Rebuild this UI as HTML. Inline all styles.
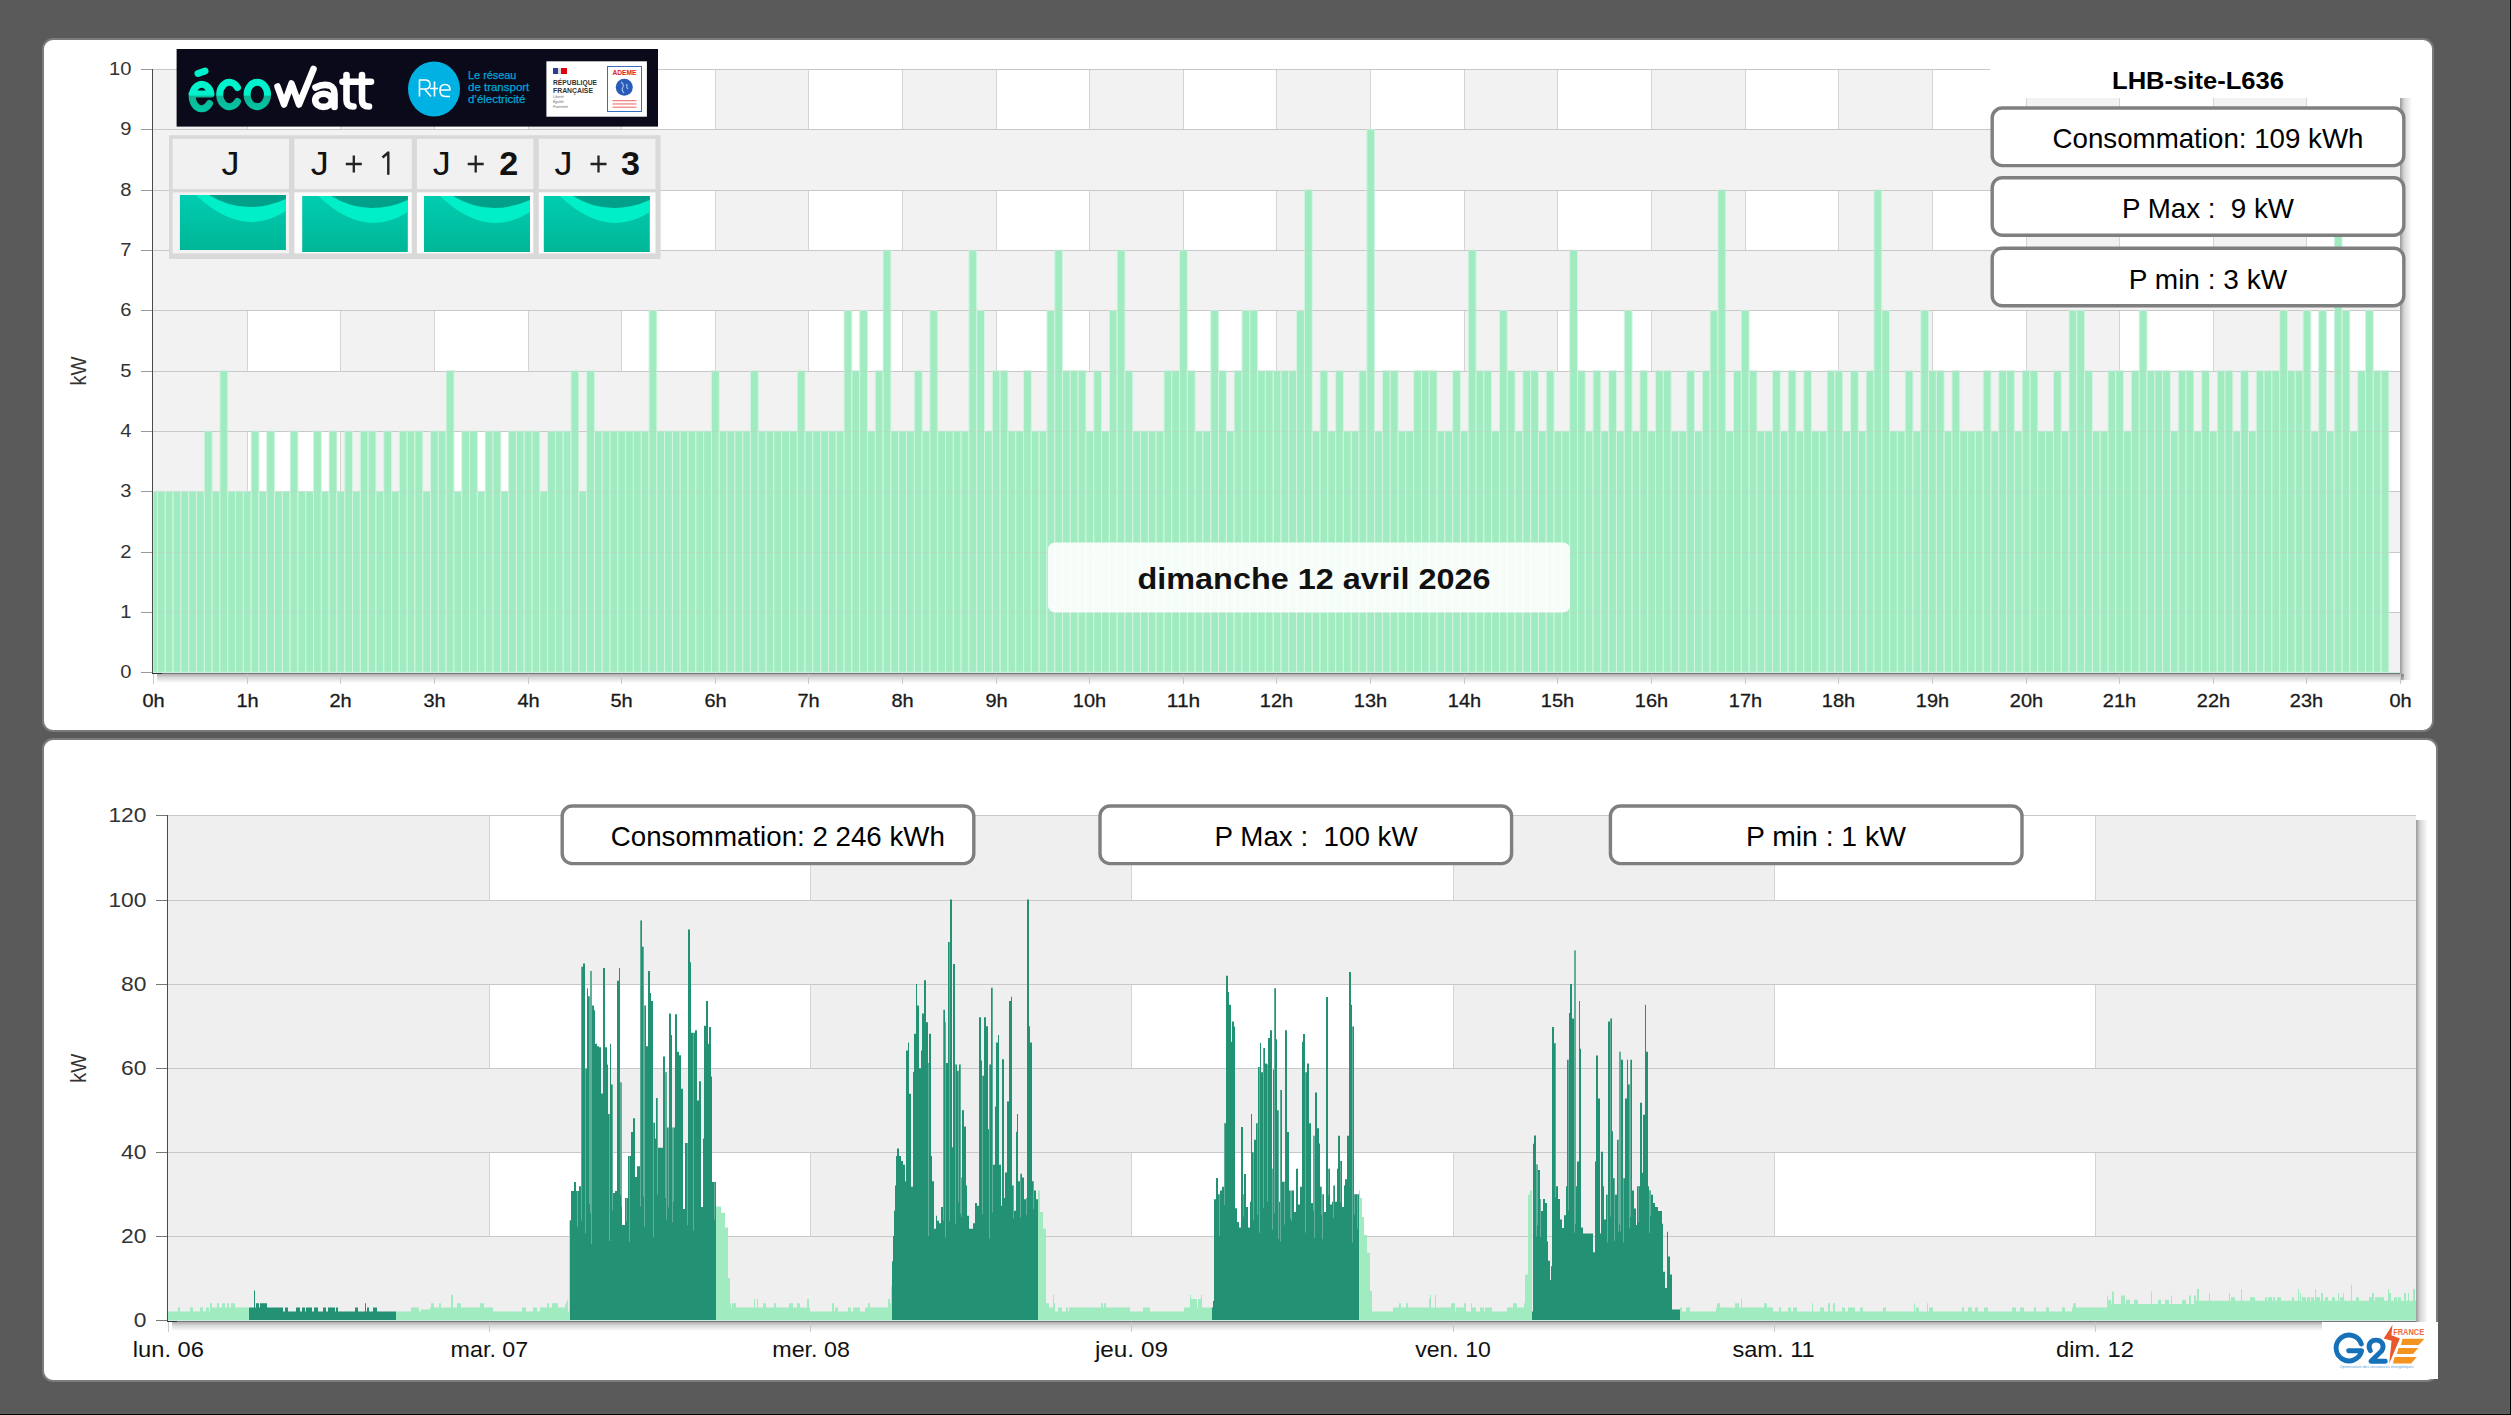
<!DOCTYPE html><html><head><meta charset="utf-8"><title>chart</title><style>
html,body{margin:0;padding:0;width:2511px;height:1415px;overflow:hidden;background:#5a5a5a;}
svg{position:absolute;left:0;top:0;display:block}
</style></head><body>
<svg width="2511" height="1415" viewBox="0 0 2511 1415" font-family="Liberation Sans, sans-serif">
<defs>
<linearGradient id="teal" x1="0" y1="0" x2="0" y2="1"><stop offset="0" stop-color="#00cdb0"/><stop offset="1" stop-color="#00b697"/></linearGradient>
<linearGradient id="eco" gradientUnits="userSpaceOnUse" x1="0" y1="66" x2="0" y2="112"><stop offset="0" stop-color="#00f2cc"/><stop offset="0.63" stop-color="#00f2cc"/><stop offset="0.66" stop-color="#0fb596"/><stop offset="1" stop-color="#00c8a4"/></linearGradient>
<linearGradient id="shR" x1="0" y1="0" x2="1" y2="0"><stop offset="0" stop-color="#000" stop-opacity="0.40"/><stop offset="0.35" stop-color="#000" stop-opacity="0.16"/><stop offset="1" stop-color="#000" stop-opacity="0"/></linearGradient>
<linearGradient id="shB" x1="0" y1="0" x2="0" y2="1"><stop offset="0" stop-color="#000" stop-opacity="0.32"/><stop offset="0.4" stop-color="#000" stop-opacity="0.15"/><stop offset="1" stop-color="#000" stop-opacity="0"/></linearGradient>
</defs>
<rect x="2509" y="0" width="1" height="1414" fill="#606060"/>
<rect x="0" y="1413" width="2510" height="1" fill="#606060"/>
<rect x="2510" y="0" width="1" height="1415" fill="#000"/>
<rect x="0" y="1414" width="2511" height="1" fill="#000"/>
<rect x="43" y="39" width="2390" height="692" rx="10" ry="10" fill="#fff" stroke="#7b7b7b" stroke-width="2"/>
<rect x="43" y="739" width="2394" height="642" rx="10" ry="10" fill="#fff" stroke="#7b7b7b" stroke-width="2"/>
<rect x="153" y="612" width="2247" height="60" fill="#f2f2f2"/>
<rect x="153" y="552" width="94" height="60" fill="#f2f2f2"/>
<rect x="340" y="552" width="94" height="60" fill="#f2f2f2"/>
<rect x="528" y="552" width="93" height="60" fill="#f2f2f2"/>
<rect x="715" y="552" width="93" height="60" fill="#f2f2f2"/>
<rect x="902" y="552" width="94" height="60" fill="#f2f2f2"/>
<rect x="1089" y="552" width="94" height="60" fill="#f2f2f2"/>
<rect x="1276" y="552" width="94" height="60" fill="#f2f2f2"/>
<rect x="1464" y="552" width="93" height="60" fill="#f2f2f2"/>
<rect x="1651" y="552" width="94" height="60" fill="#f2f2f2"/>
<rect x="1838" y="552" width="94" height="60" fill="#f2f2f2"/>
<rect x="2026" y="552" width="93" height="60" fill="#f2f2f2"/>
<rect x="2213" y="552" width="93" height="60" fill="#f2f2f2"/>
<rect x="247" y="552" width="1" height="60" fill="#d4d4d4"/>
<rect x="340" y="552" width="1" height="60" fill="#d4d4d4"/>
<rect x="434" y="552" width="1" height="60" fill="#d4d4d4"/>
<rect x="528" y="552" width="1" height="60" fill="#d4d4d4"/>
<rect x="621" y="552" width="1" height="60" fill="#d4d4d4"/>
<rect x="715" y="552" width="1" height="60" fill="#d4d4d4"/>
<rect x="808" y="552" width="1" height="60" fill="#d4d4d4"/>
<rect x="902" y="552" width="1" height="60" fill="#d4d4d4"/>
<rect x="996" y="552" width="1" height="60" fill="#d4d4d4"/>
<rect x="1089" y="552" width="1" height="60" fill="#d4d4d4"/>
<rect x="1183" y="552" width="1" height="60" fill="#d4d4d4"/>
<rect x="1276" y="552" width="1" height="60" fill="#d4d4d4"/>
<rect x="1370" y="552" width="1" height="60" fill="#d4d4d4"/>
<rect x="1464" y="552" width="1" height="60" fill="#d4d4d4"/>
<rect x="1557" y="552" width="1" height="60" fill="#d4d4d4"/>
<rect x="1651" y="552" width="1" height="60" fill="#d4d4d4"/>
<rect x="1745" y="552" width="1" height="60" fill="#d4d4d4"/>
<rect x="1838" y="552" width="1" height="60" fill="#d4d4d4"/>
<rect x="1932" y="552" width="1" height="60" fill="#d4d4d4"/>
<rect x="2026" y="552" width="1" height="60" fill="#d4d4d4"/>
<rect x="2119" y="552" width="1" height="60" fill="#d4d4d4"/>
<rect x="2213" y="552" width="1" height="60" fill="#d4d4d4"/>
<rect x="2306" y="552" width="1" height="60" fill="#d4d4d4"/>
<rect x="153" y="491" width="2247" height="61" fill="#f2f2f2"/>
<rect x="153" y="431" width="94" height="60" fill="#f2f2f2"/>
<rect x="340" y="431" width="94" height="60" fill="#f2f2f2"/>
<rect x="528" y="431" width="93" height="60" fill="#f2f2f2"/>
<rect x="715" y="431" width="93" height="60" fill="#f2f2f2"/>
<rect x="902" y="431" width="94" height="60" fill="#f2f2f2"/>
<rect x="1089" y="431" width="94" height="60" fill="#f2f2f2"/>
<rect x="1276" y="431" width="94" height="60" fill="#f2f2f2"/>
<rect x="1464" y="431" width="93" height="60" fill="#f2f2f2"/>
<rect x="1651" y="431" width="94" height="60" fill="#f2f2f2"/>
<rect x="1838" y="431" width="94" height="60" fill="#f2f2f2"/>
<rect x="2026" y="431" width="93" height="60" fill="#f2f2f2"/>
<rect x="2213" y="431" width="93" height="60" fill="#f2f2f2"/>
<rect x="247" y="431" width="1" height="60" fill="#d4d4d4"/>
<rect x="340" y="431" width="1" height="60" fill="#d4d4d4"/>
<rect x="434" y="431" width="1" height="60" fill="#d4d4d4"/>
<rect x="528" y="431" width="1" height="60" fill="#d4d4d4"/>
<rect x="621" y="431" width="1" height="60" fill="#d4d4d4"/>
<rect x="715" y="431" width="1" height="60" fill="#d4d4d4"/>
<rect x="808" y="431" width="1" height="60" fill="#d4d4d4"/>
<rect x="902" y="431" width="1" height="60" fill="#d4d4d4"/>
<rect x="996" y="431" width="1" height="60" fill="#d4d4d4"/>
<rect x="1089" y="431" width="1" height="60" fill="#d4d4d4"/>
<rect x="1183" y="431" width="1" height="60" fill="#d4d4d4"/>
<rect x="1276" y="431" width="1" height="60" fill="#d4d4d4"/>
<rect x="1370" y="431" width="1" height="60" fill="#d4d4d4"/>
<rect x="1464" y="431" width="1" height="60" fill="#d4d4d4"/>
<rect x="1557" y="431" width="1" height="60" fill="#d4d4d4"/>
<rect x="1651" y="431" width="1" height="60" fill="#d4d4d4"/>
<rect x="1745" y="431" width="1" height="60" fill="#d4d4d4"/>
<rect x="1838" y="431" width="1" height="60" fill="#d4d4d4"/>
<rect x="1932" y="431" width="1" height="60" fill="#d4d4d4"/>
<rect x="2026" y="431" width="1" height="60" fill="#d4d4d4"/>
<rect x="2119" y="431" width="1" height="60" fill="#d4d4d4"/>
<rect x="2213" y="431" width="1" height="60" fill="#d4d4d4"/>
<rect x="2306" y="431" width="1" height="60" fill="#d4d4d4"/>
<rect x="153" y="371" width="2247" height="60" fill="#f2f2f2"/>
<rect x="153" y="310" width="94" height="61" fill="#f2f2f2"/>
<rect x="340" y="310" width="94" height="61" fill="#f2f2f2"/>
<rect x="528" y="310" width="93" height="61" fill="#f2f2f2"/>
<rect x="715" y="310" width="93" height="61" fill="#f2f2f2"/>
<rect x="902" y="310" width="94" height="61" fill="#f2f2f2"/>
<rect x="1089" y="310" width="94" height="61" fill="#f2f2f2"/>
<rect x="1276" y="310" width="94" height="61" fill="#f2f2f2"/>
<rect x="1464" y="310" width="93" height="61" fill="#f2f2f2"/>
<rect x="1651" y="310" width="94" height="61" fill="#f2f2f2"/>
<rect x="1838" y="310" width="94" height="61" fill="#f2f2f2"/>
<rect x="2026" y="310" width="93" height="61" fill="#f2f2f2"/>
<rect x="2213" y="310" width="93" height="61" fill="#f2f2f2"/>
<rect x="247" y="310" width="1" height="61" fill="#d4d4d4"/>
<rect x="340" y="310" width="1" height="61" fill="#d4d4d4"/>
<rect x="434" y="310" width="1" height="61" fill="#d4d4d4"/>
<rect x="528" y="310" width="1" height="61" fill="#d4d4d4"/>
<rect x="621" y="310" width="1" height="61" fill="#d4d4d4"/>
<rect x="715" y="310" width="1" height="61" fill="#d4d4d4"/>
<rect x="808" y="310" width="1" height="61" fill="#d4d4d4"/>
<rect x="902" y="310" width="1" height="61" fill="#d4d4d4"/>
<rect x="996" y="310" width="1" height="61" fill="#d4d4d4"/>
<rect x="1089" y="310" width="1" height="61" fill="#d4d4d4"/>
<rect x="1183" y="310" width="1" height="61" fill="#d4d4d4"/>
<rect x="1276" y="310" width="1" height="61" fill="#d4d4d4"/>
<rect x="1370" y="310" width="1" height="61" fill="#d4d4d4"/>
<rect x="1464" y="310" width="1" height="61" fill="#d4d4d4"/>
<rect x="1557" y="310" width="1" height="61" fill="#d4d4d4"/>
<rect x="1651" y="310" width="1" height="61" fill="#d4d4d4"/>
<rect x="1745" y="310" width="1" height="61" fill="#d4d4d4"/>
<rect x="1838" y="310" width="1" height="61" fill="#d4d4d4"/>
<rect x="1932" y="310" width="1" height="61" fill="#d4d4d4"/>
<rect x="2026" y="310" width="1" height="61" fill="#d4d4d4"/>
<rect x="2119" y="310" width="1" height="61" fill="#d4d4d4"/>
<rect x="2213" y="310" width="1" height="61" fill="#d4d4d4"/>
<rect x="2306" y="310" width="1" height="61" fill="#d4d4d4"/>
<rect x="153" y="250" width="2247" height="60" fill="#f2f2f2"/>
<rect x="153" y="190" width="94" height="60" fill="#f2f2f2"/>
<rect x="340" y="190" width="94" height="60" fill="#f2f2f2"/>
<rect x="528" y="190" width="93" height="60" fill="#f2f2f2"/>
<rect x="715" y="190" width="93" height="60" fill="#f2f2f2"/>
<rect x="902" y="190" width="94" height="60" fill="#f2f2f2"/>
<rect x="1089" y="190" width="94" height="60" fill="#f2f2f2"/>
<rect x="1276" y="190" width="94" height="60" fill="#f2f2f2"/>
<rect x="1464" y="190" width="93" height="60" fill="#f2f2f2"/>
<rect x="1651" y="190" width="94" height="60" fill="#f2f2f2"/>
<rect x="1838" y="190" width="94" height="60" fill="#f2f2f2"/>
<rect x="2026" y="190" width="93" height="60" fill="#f2f2f2"/>
<rect x="2213" y="190" width="93" height="60" fill="#f2f2f2"/>
<rect x="247" y="190" width="1" height="60" fill="#d4d4d4"/>
<rect x="340" y="190" width="1" height="60" fill="#d4d4d4"/>
<rect x="434" y="190" width="1" height="60" fill="#d4d4d4"/>
<rect x="528" y="190" width="1" height="60" fill="#d4d4d4"/>
<rect x="621" y="190" width="1" height="60" fill="#d4d4d4"/>
<rect x="715" y="190" width="1" height="60" fill="#d4d4d4"/>
<rect x="808" y="190" width="1" height="60" fill="#d4d4d4"/>
<rect x="902" y="190" width="1" height="60" fill="#d4d4d4"/>
<rect x="996" y="190" width="1" height="60" fill="#d4d4d4"/>
<rect x="1089" y="190" width="1" height="60" fill="#d4d4d4"/>
<rect x="1183" y="190" width="1" height="60" fill="#d4d4d4"/>
<rect x="1276" y="190" width="1" height="60" fill="#d4d4d4"/>
<rect x="1370" y="190" width="1" height="60" fill="#d4d4d4"/>
<rect x="1464" y="190" width="1" height="60" fill="#d4d4d4"/>
<rect x="1557" y="190" width="1" height="60" fill="#d4d4d4"/>
<rect x="1651" y="190" width="1" height="60" fill="#d4d4d4"/>
<rect x="1745" y="190" width="1" height="60" fill="#d4d4d4"/>
<rect x="1838" y="190" width="1" height="60" fill="#d4d4d4"/>
<rect x="1932" y="190" width="1" height="60" fill="#d4d4d4"/>
<rect x="2026" y="190" width="1" height="60" fill="#d4d4d4"/>
<rect x="2119" y="190" width="1" height="60" fill="#d4d4d4"/>
<rect x="2213" y="190" width="1" height="60" fill="#d4d4d4"/>
<rect x="2306" y="190" width="1" height="60" fill="#d4d4d4"/>
<rect x="153" y="129" width="2247" height="61" fill="#f2f2f2"/>
<rect x="153" y="69" width="94" height="60" fill="#f2f2f2"/>
<rect x="340" y="69" width="94" height="60" fill="#f2f2f2"/>
<rect x="528" y="69" width="93" height="60" fill="#f2f2f2"/>
<rect x="715" y="69" width="93" height="60" fill="#f2f2f2"/>
<rect x="902" y="69" width="94" height="60" fill="#f2f2f2"/>
<rect x="1089" y="69" width="94" height="60" fill="#f2f2f2"/>
<rect x="1276" y="69" width="94" height="60" fill="#f2f2f2"/>
<rect x="1464" y="69" width="93" height="60" fill="#f2f2f2"/>
<rect x="1651" y="69" width="94" height="60" fill="#f2f2f2"/>
<rect x="1838" y="69" width="94" height="60" fill="#f2f2f2"/>
<rect x="2026" y="69" width="93" height="60" fill="#f2f2f2"/>
<rect x="2213" y="69" width="93" height="60" fill="#f2f2f2"/>
<rect x="247" y="69" width="1" height="60" fill="#d4d4d4"/>
<rect x="340" y="69" width="1" height="60" fill="#d4d4d4"/>
<rect x="434" y="69" width="1" height="60" fill="#d4d4d4"/>
<rect x="528" y="69" width="1" height="60" fill="#d4d4d4"/>
<rect x="621" y="69" width="1" height="60" fill="#d4d4d4"/>
<rect x="715" y="69" width="1" height="60" fill="#d4d4d4"/>
<rect x="808" y="69" width="1" height="60" fill="#d4d4d4"/>
<rect x="902" y="69" width="1" height="60" fill="#d4d4d4"/>
<rect x="996" y="69" width="1" height="60" fill="#d4d4d4"/>
<rect x="1089" y="69" width="1" height="60" fill="#d4d4d4"/>
<rect x="1183" y="69" width="1" height="60" fill="#d4d4d4"/>
<rect x="1276" y="69" width="1" height="60" fill="#d4d4d4"/>
<rect x="1370" y="69" width="1" height="60" fill="#d4d4d4"/>
<rect x="1464" y="69" width="1" height="60" fill="#d4d4d4"/>
<rect x="1557" y="69" width="1" height="60" fill="#d4d4d4"/>
<rect x="1651" y="69" width="1" height="60" fill="#d4d4d4"/>
<rect x="1745" y="69" width="1" height="60" fill="#d4d4d4"/>
<rect x="1838" y="69" width="1" height="60" fill="#d4d4d4"/>
<rect x="1932" y="69" width="1" height="60" fill="#d4d4d4"/>
<rect x="2026" y="69" width="1" height="60" fill="#d4d4d4"/>
<rect x="2119" y="69" width="1" height="60" fill="#d4d4d4"/>
<rect x="2213" y="69" width="1" height="60" fill="#d4d4d4"/>
<rect x="2306" y="69" width="1" height="60" fill="#d4d4d4"/>
<rect x="153" y="612" width="2247" height="1" fill="#c8c8c8"/>
<rect x="153" y="552" width="2247" height="1" fill="#c8c8c8"/>
<rect x="153" y="491" width="2247" height="1" fill="#c8c8c8"/>
<rect x="153" y="431" width="2247" height="1" fill="#c8c8c8"/>
<rect x="153" y="371" width="2247" height="1" fill="#c8c8c8"/>
<rect x="153" y="310" width="2247" height="1" fill="#c8c8c8"/>
<rect x="153" y="250" width="2247" height="1" fill="#c8c8c8"/>
<rect x="153" y="190" width="2247" height="1" fill="#c8c8c8"/>
<rect x="153" y="129" width="2247" height="1" fill="#c8c8c8"/>
<rect x="153" y="69" width="2247" height="1" fill="#c8c8c8"/>
<g fill="#a0ecc0" stroke="#d2f5e2" stroke-width="1"><rect x="153" y="491.34" width="4.5" height="180.96"/><rect x="157.5" y="491.34" width="7.8" height="180.96"/><rect x="165.3" y="491.34" width="7.8" height="180.96"/><rect x="173.11" y="491.34" width="7.8" height="180.96"/><rect x="180.91" y="491.34" width="7.8" height="180.96"/><rect x="188.71" y="491.34" width="7.8" height="180.96"/><rect x="196.51" y="491.34" width="7.8" height="180.96"/><rect x="204.31" y="431.02" width="7.8" height="241.28"/><rect x="212.12" y="491.34" width="7.8" height="180.96"/><rect x="219.92" y="370.7" width="7.8" height="301.6"/><rect x="227.72" y="491.34" width="7.8" height="180.96"/><rect x="235.52" y="491.34" width="7.8" height="180.96"/><rect x="243.32" y="491.34" width="7.8" height="180.96"/><rect x="251.13" y="431.02" width="7.8" height="241.28"/><rect x="258.93" y="491.34" width="7.8" height="180.96"/><rect x="266.73" y="431.02" width="7.8" height="241.28"/><rect x="274.53" y="491.34" width="7.8" height="180.96"/><rect x="282.33" y="491.34" width="7.8" height="180.96"/><rect x="290.14" y="431.02" width="7.8" height="241.28"/><rect x="297.94" y="491.34" width="7.8" height="180.96"/><rect x="305.74" y="491.34" width="7.8" height="180.96"/><rect x="313.54" y="431.02" width="7.8" height="241.28"/><rect x="321.34" y="491.34" width="7.8" height="180.96"/><rect x="329.15" y="431.02" width="7.8" height="241.28"/><rect x="336.95" y="491.34" width="7.8" height="180.96"/><rect x="344.75" y="431.02" width="7.8" height="241.28"/><rect x="352.55" y="491.34" width="7.8" height="180.96"/><rect x="360.36" y="431.02" width="7.8" height="241.28"/><rect x="368.16" y="431.02" width="7.8" height="241.28"/><rect x="375.96" y="491.34" width="7.8" height="180.96"/><rect x="383.76" y="431.02" width="7.8" height="241.28"/><rect x="391.56" y="491.34" width="7.8" height="180.96"/><rect x="399.37" y="431.02" width="7.8" height="241.28"/><rect x="407.17" y="431.02" width="7.8" height="241.28"/><rect x="414.97" y="431.02" width="7.8" height="241.28"/><rect x="422.77" y="491.34" width="7.8" height="180.96"/><rect x="430.57" y="431.02" width="7.8" height="241.28"/><rect x="438.38" y="431.02" width="7.8" height="241.28"/><rect x="446.18" y="370.7" width="7.8" height="301.6"/><rect x="453.98" y="491.34" width="7.8" height="180.96"/><rect x="461.78" y="431.02" width="7.8" height="241.28"/><rect x="469.58" y="431.02" width="7.8" height="241.28"/><rect x="477.39" y="491.34" width="7.8" height="180.96"/><rect x="485.19" y="431.02" width="7.8" height="241.28"/><rect x="492.99" y="431.02" width="7.8" height="241.28"/><rect x="500.79" y="491.34" width="7.8" height="180.96"/><rect x="508.59" y="431.02" width="7.8" height="241.28"/><rect x="516.4" y="431.02" width="7.8" height="241.28"/><rect x="524.2" y="431.02" width="7.8" height="241.28"/><rect x="532" y="431.02" width="7.8" height="241.28"/><rect x="539.8" y="491.34" width="7.8" height="180.96"/><rect x="547.61" y="431.02" width="7.8" height="241.28"/><rect x="555.41" y="431.02" width="7.8" height="241.28"/><rect x="563.21" y="431.02" width="7.8" height="241.28"/><rect x="571.01" y="370.7" width="7.8" height="301.6"/><rect x="578.81" y="491.34" width="7.8" height="180.96"/><rect x="586.62" y="370.7" width="7.8" height="301.6"/><rect x="594.42" y="431.02" width="7.8" height="241.28"/><rect x="602.22" y="431.02" width="7.8" height="241.28"/><rect x="610.02" y="431.02" width="7.8" height="241.28"/><rect x="617.82" y="431.02" width="7.8" height="241.28"/><rect x="625.63" y="431.02" width="7.8" height="241.28"/><rect x="633.43" y="431.02" width="7.8" height="241.28"/><rect x="641.23" y="431.02" width="7.8" height="241.28"/><rect x="649.03" y="310.38" width="7.8" height="361.92"/><rect x="656.83" y="431.02" width="7.8" height="241.28"/><rect x="664.64" y="431.02" width="7.8" height="241.28"/><rect x="672.44" y="431.02" width="7.8" height="241.28"/><rect x="680.24" y="431.02" width="7.8" height="241.28"/><rect x="688.04" y="431.02" width="7.8" height="241.28"/><rect x="695.84" y="431.02" width="7.8" height="241.28"/><rect x="703.65" y="431.02" width="7.8" height="241.28"/><rect x="711.45" y="370.7" width="7.8" height="301.6"/><rect x="719.25" y="431.02" width="7.8" height="241.28"/><rect x="727.05" y="431.02" width="7.8" height="241.28"/><rect x="734.86" y="431.02" width="7.8" height="241.28"/><rect x="742.66" y="431.02" width="7.8" height="241.28"/><rect x="750.46" y="370.7" width="7.8" height="301.6"/><rect x="758.26" y="431.02" width="7.8" height="241.28"/><rect x="766.06" y="431.02" width="7.8" height="241.28"/><rect x="773.87" y="431.02" width="7.8" height="241.28"/><rect x="781.67" y="431.02" width="7.8" height="241.28"/><rect x="789.47" y="431.02" width="7.8" height="241.28"/><rect x="797.27" y="370.7" width="7.8" height="301.6"/><rect x="805.07" y="431.02" width="7.8" height="241.28"/><rect x="812.88" y="431.02" width="7.8" height="241.28"/><rect x="820.68" y="431.02" width="7.8" height="241.28"/><rect x="828.48" y="431.02" width="7.8" height="241.28"/><rect x="836.28" y="431.02" width="7.8" height="241.28"/><rect x="844.08" y="310.38" width="7.8" height="361.92"/><rect x="851.89" y="370.7" width="7.8" height="301.6"/><rect x="859.69" y="310.38" width="7.8" height="361.92"/><rect x="867.49" y="431.02" width="7.8" height="241.28"/><rect x="875.29" y="370.7" width="7.8" height="301.6"/><rect x="883.09" y="250.06" width="7.8" height="422.24"/><rect x="890.9" y="431.02" width="7.8" height="241.28"/><rect x="898.7" y="431.02" width="7.8" height="241.28"/><rect x="906.5" y="431.02" width="7.8" height="241.28"/><rect x="914.3" y="370.7" width="7.8" height="301.6"/><rect x="922.11" y="431.02" width="7.8" height="241.28"/><rect x="929.91" y="310.38" width="7.8" height="361.92"/><rect x="937.71" y="431.02" width="7.8" height="241.28"/><rect x="945.51" y="431.02" width="7.8" height="241.28"/><rect x="953.31" y="431.02" width="7.8" height="241.28"/><rect x="961.12" y="431.02" width="7.8" height="241.28"/><rect x="968.92" y="250.06" width="7.8" height="422.24"/><rect x="976.72" y="310.38" width="7.8" height="361.92"/><rect x="984.52" y="431.02" width="7.8" height="241.28"/><rect x="992.32" y="370.7" width="7.8" height="301.6"/><rect x="1000.13" y="370.7" width="7.8" height="301.6"/><rect x="1007.93" y="431.02" width="7.8" height="241.28"/><rect x="1015.73" y="431.02" width="7.8" height="241.28"/><rect x="1023.53" y="370.7" width="7.8" height="301.6"/><rect x="1031.33" y="431.02" width="7.8" height="241.28"/><rect x="1039.14" y="431.02" width="7.8" height="241.28"/><rect x="1046.94" y="310.38" width="7.8" height="361.92"/><rect x="1054.74" y="250.06" width="7.8" height="422.24"/><rect x="1062.54" y="370.7" width="7.8" height="301.6"/><rect x="1070.34" y="370.7" width="7.8" height="301.6"/><rect x="1078.15" y="370.7" width="7.8" height="301.6"/><rect x="1085.95" y="431.02" width="7.8" height="241.28"/><rect x="1093.75" y="370.7" width="7.8" height="301.6"/><rect x="1101.55" y="431.02" width="7.8" height="241.28"/><rect x="1109.36" y="310.38" width="7.8" height="361.92"/><rect x="1117.16" y="250.06" width="7.8" height="422.24"/><rect x="1124.96" y="370.7" width="7.8" height="301.6"/><rect x="1132.76" y="431.02" width="7.8" height="241.28"/><rect x="1140.56" y="431.02" width="7.8" height="241.28"/><rect x="1148.37" y="431.02" width="7.8" height="241.28"/><rect x="1156.17" y="431.02" width="7.8" height="241.28"/><rect x="1163.97" y="370.7" width="7.8" height="301.6"/><rect x="1171.77" y="370.7" width="7.8" height="301.6"/><rect x="1179.57" y="250.06" width="7.8" height="422.24"/><rect x="1187.38" y="370.7" width="7.8" height="301.6"/><rect x="1195.18" y="431.02" width="7.8" height="241.28"/><rect x="1202.98" y="431.02" width="7.8" height="241.28"/><rect x="1210.78" y="310.38" width="7.8" height="361.92"/><rect x="1218.58" y="370.7" width="7.8" height="301.6"/><rect x="1226.39" y="431.02" width="7.8" height="241.28"/><rect x="1234.19" y="370.7" width="7.8" height="301.6"/><rect x="1241.99" y="310.38" width="7.8" height="361.92"/><rect x="1249.79" y="310.38" width="7.8" height="361.92"/><rect x="1257.59" y="370.7" width="7.8" height="301.6"/><rect x="1265.4" y="370.7" width="7.8" height="301.6"/><rect x="1273.2" y="370.7" width="7.8" height="301.6"/><rect x="1281" y="370.7" width="7.8" height="301.6"/><rect x="1288.8" y="370.7" width="7.8" height="301.6"/><rect x="1296.61" y="310.38" width="7.8" height="361.92"/><rect x="1304.41" y="189.74" width="7.8" height="482.56"/><rect x="1312.21" y="431.02" width="7.8" height="241.28"/><rect x="1320.01" y="370.7" width="7.8" height="301.6"/><rect x="1327.81" y="431.02" width="7.8" height="241.28"/><rect x="1335.62" y="370.7" width="7.8" height="301.6"/><rect x="1343.42" y="431.02" width="7.8" height="241.28"/><rect x="1351.22" y="431.02" width="7.8" height="241.28"/><rect x="1359.02" y="370.7" width="7.8" height="301.6"/><rect x="1366.82" y="129.42" width="7.8" height="542.88"/><rect x="1374.63" y="431.02" width="7.8" height="241.28"/><rect x="1382.43" y="370.7" width="7.8" height="301.6"/><rect x="1390.23" y="370.7" width="7.8" height="301.6"/><rect x="1398.03" y="431.02" width="7.8" height="241.28"/><rect x="1405.83" y="431.02" width="7.8" height="241.28"/><rect x="1413.64" y="370.7" width="7.8" height="301.6"/><rect x="1421.44" y="370.7" width="7.8" height="301.6"/><rect x="1429.24" y="370.7" width="7.8" height="301.6"/><rect x="1437.04" y="431.02" width="7.8" height="241.28"/><rect x="1444.84" y="431.02" width="7.8" height="241.28"/><rect x="1452.65" y="370.7" width="7.8" height="301.6"/><rect x="1460.45" y="431.02" width="7.8" height="241.28"/><rect x="1468.25" y="250.06" width="7.8" height="422.24"/><rect x="1476.05" y="370.7" width="7.8" height="301.6"/><rect x="1483.86" y="370.7" width="7.8" height="301.6"/><rect x="1491.66" y="431.02" width="7.8" height="241.28"/><rect x="1499.46" y="310.38" width="7.8" height="361.92"/><rect x="1507.26" y="370.7" width="7.8" height="301.6"/><rect x="1515.06" y="431.02" width="7.8" height="241.28"/><rect x="1522.87" y="370.7" width="7.8" height="301.6"/><rect x="1530.67" y="370.7" width="7.8" height="301.6"/><rect x="1538.47" y="431.02" width="7.8" height="241.28"/><rect x="1546.27" y="370.7" width="7.8" height="301.6"/><rect x="1554.07" y="431.02" width="7.8" height="241.28"/><rect x="1561.88" y="431.02" width="7.8" height="241.28"/><rect x="1569.68" y="250.06" width="7.8" height="422.24"/><rect x="1577.48" y="370.7" width="7.8" height="301.6"/><rect x="1585.28" y="431.02" width="7.8" height="241.28"/><rect x="1593.08" y="370.7" width="7.8" height="301.6"/><rect x="1600.89" y="431.02" width="7.8" height="241.28"/><rect x="1608.69" y="370.7" width="7.8" height="301.6"/><rect x="1616.49" y="431.02" width="7.8" height="241.28"/><rect x="1624.29" y="310.38" width="7.8" height="361.92"/><rect x="1632.09" y="431.02" width="7.8" height="241.28"/><rect x="1639.9" y="370.7" width="7.8" height="301.6"/><rect x="1647.7" y="431.02" width="7.8" height="241.28"/><rect x="1655.5" y="370.7" width="7.8" height="301.6"/><rect x="1663.3" y="370.7" width="7.8" height="301.6"/><rect x="1671.11" y="431.02" width="7.8" height="241.28"/><rect x="1678.91" y="431.02" width="7.8" height="241.28"/><rect x="1686.71" y="370.7" width="7.8" height="301.6"/><rect x="1694.51" y="431.02" width="7.8" height="241.28"/><rect x="1702.31" y="370.7" width="7.8" height="301.6"/><rect x="1710.12" y="310.38" width="7.8" height="361.92"/><rect x="1717.92" y="189.74" width="7.8" height="482.56"/><rect x="1725.72" y="431.02" width="7.8" height="241.28"/><rect x="1733.52" y="370.7" width="7.8" height="301.6"/><rect x="1741.32" y="310.38" width="7.8" height="361.92"/><rect x="1749.13" y="370.7" width="7.8" height="301.6"/><rect x="1756.93" y="431.02" width="7.8" height="241.28"/><rect x="1764.73" y="431.02" width="7.8" height="241.28"/><rect x="1772.53" y="370.7" width="7.8" height="301.6"/><rect x="1780.33" y="431.02" width="7.8" height="241.28"/><rect x="1788.14" y="370.7" width="7.8" height="301.6"/><rect x="1795.94" y="431.02" width="7.8" height="241.28"/><rect x="1803.74" y="370.7" width="7.8" height="301.6"/><rect x="1811.54" y="431.02" width="7.8" height="241.28"/><rect x="1819.34" y="431.02" width="7.8" height="241.28"/><rect x="1827.15" y="370.7" width="7.8" height="301.6"/><rect x="1834.95" y="370.7" width="7.8" height="301.6"/><rect x="1842.75" y="431.02" width="7.8" height="241.28"/><rect x="1850.55" y="370.7" width="7.8" height="301.6"/><rect x="1858.36" y="431.02" width="7.8" height="241.28"/><rect x="1866.16" y="370.7" width="7.8" height="301.6"/><rect x="1873.96" y="189.74" width="7.8" height="482.56"/><rect x="1881.76" y="310.38" width="7.8" height="361.92"/><rect x="1889.56" y="431.02" width="7.8" height="241.28"/><rect x="1897.37" y="431.02" width="7.8" height="241.28"/><rect x="1905.17" y="370.7" width="7.8" height="301.6"/><rect x="1912.97" y="431.02" width="7.8" height="241.28"/><rect x="1920.77" y="310.38" width="7.8" height="361.92"/><rect x="1928.57" y="370.7" width="7.8" height="301.6"/><rect x="1936.38" y="370.7" width="7.8" height="301.6"/><rect x="1944.18" y="431.02" width="7.8" height="241.28"/><rect x="1951.98" y="370.7" width="7.8" height="301.6"/><rect x="1959.78" y="431.02" width="7.8" height="241.28"/><rect x="1967.58" y="431.02" width="7.8" height="241.28"/><rect x="1975.39" y="431.02" width="7.8" height="241.28"/><rect x="1983.19" y="370.7" width="7.8" height="301.6"/><rect x="1990.99" y="431.02" width="7.8" height="241.28"/><rect x="1998.79" y="370.7" width="7.8" height="301.6"/><rect x="2006.59" y="370.7" width="7.8" height="301.6"/><rect x="2014.4" y="431.02" width="7.8" height="241.28"/><rect x="2022.2" y="370.7" width="7.8" height="301.6"/><rect x="2030" y="370.7" width="7.8" height="301.6"/><rect x="2037.8" y="431.02" width="7.8" height="241.28"/><rect x="2045.61" y="431.02" width="7.8" height="241.28"/><rect x="2053.41" y="370.7" width="7.8" height="301.6"/><rect x="2061.21" y="431.02" width="7.8" height="241.28"/><rect x="2069.01" y="310.38" width="7.8" height="361.92"/><rect x="2076.81" y="310.38" width="7.8" height="361.92"/><rect x="2084.62" y="370.7" width="7.8" height="301.6"/><rect x="2092.42" y="431.02" width="7.8" height="241.28"/><rect x="2100.22" y="431.02" width="7.8" height="241.28"/><rect x="2108.02" y="370.7" width="7.8" height="301.6"/><rect x="2115.82" y="370.7" width="7.8" height="301.6"/><rect x="2123.63" y="431.02" width="7.8" height="241.28"/><rect x="2131.43" y="370.7" width="7.8" height="301.6"/><rect x="2139.23" y="310.38" width="7.8" height="361.92"/><rect x="2147.03" y="370.7" width="7.8" height="301.6"/><rect x="2154.83" y="370.7" width="7.8" height="301.6"/><rect x="2162.64" y="370.7" width="7.8" height="301.6"/><rect x="2170.44" y="431.02" width="7.8" height="241.28"/><rect x="2178.24" y="370.7" width="7.8" height="301.6"/><rect x="2186.04" y="370.7" width="7.8" height="301.6"/><rect x="2193.84" y="431.02" width="7.8" height="241.28"/><rect x="2201.65" y="370.7" width="7.8" height="301.6"/><rect x="2209.45" y="431.02" width="7.8" height="241.28"/><rect x="2217.25" y="370.7" width="7.8" height="301.6"/><rect x="2225.05" y="370.7" width="7.8" height="301.6"/><rect x="2232.86" y="431.02" width="7.8" height="241.28"/><rect x="2240.66" y="370.7" width="7.8" height="301.6"/><rect x="2248.46" y="431.02" width="7.8" height="241.28"/><rect x="2256.26" y="370.7" width="7.8" height="301.6"/><rect x="2264.06" y="370.7" width="7.8" height="301.6"/><rect x="2271.87" y="370.7" width="7.8" height="301.6"/><rect x="2279.67" y="310.38" width="7.8" height="361.92"/><rect x="2287.47" y="370.7" width="7.8" height="301.6"/><rect x="2295.27" y="370.7" width="7.8" height="301.6"/><rect x="2303.07" y="310.38" width="7.8" height="361.92"/><rect x="2310.88" y="431.02" width="7.8" height="241.28"/><rect x="2318.68" y="310.38" width="7.8" height="361.92"/><rect x="2326.48" y="431.02" width="7.8" height="241.28"/><rect x="2334.28" y="189.74" width="7.8" height="482.56"/><rect x="2342.08" y="310.38" width="7.8" height="361.92"/><rect x="2349.89" y="431.02" width="7.8" height="241.28"/><rect x="2357.69" y="370.7" width="7.8" height="301.6"/><rect x="2365.49" y="310.38" width="7.8" height="361.92"/><rect x="2373.29" y="370.7" width="7.8" height="301.6"/><rect x="2381.09" y="370.7" width="7.8" height="301.6"/></g>
<rect x="153" y="612" width="2247" height="1" fill="#c8c8c8" opacity="0.35"/>
<rect x="153" y="552" width="2247" height="1" fill="#c8c8c8" opacity="0.35"/>
<rect x="153" y="491" width="2247" height="1" fill="#c8c8c8" opacity="0.35"/>
<rect x="153" y="431" width="2247" height="1" fill="#c8c8c8" opacity="0.35"/>
<rect x="153" y="371" width="2247" height="1" fill="#c8c8c8" opacity="0.35"/>
<rect x="153" y="310" width="2247" height="1" fill="#c8c8c8" opacity="0.35"/>
<rect x="153" y="250" width="2247" height="1" fill="#c8c8c8" opacity="0.35"/>
<rect x="153" y="190" width="2247" height="1" fill="#c8c8c8" opacity="0.35"/>
<rect x="153" y="129" width="2247" height="1" fill="#c8c8c8" opacity="0.35"/>
<path d="M1990,58 H2405 V93 Q2405,98 2400,98 H1990 Z" fill="#fff"/>
<rect x="2400" y="98" width="12" height="582" fill="url(#shR)"/>
<rect x="157" y="674" width="2247" height="9" fill="url(#shB)"/>
<rect x="152" y="69" width="1" height="604" fill="#4a4a4a"/>
<rect x="153" y="672" width="2247" height="1" fill="#cdeedc"/>
<rect x="152" y="673" width="2248" height="1" fill="#767676"/>
<rect x="152" y="673" width="10" height="1" fill="#333"/>
<rect x="141" y="672" width="11" height="1" fill="#9a9a9a"/>
<rect x="141" y="612" width="11" height="1" fill="#9a9a9a"/>
<rect x="141" y="552" width="11" height="1" fill="#9a9a9a"/>
<rect x="141" y="491" width="11" height="1" fill="#9a9a9a"/>
<rect x="141" y="431" width="11" height="1" fill="#9a9a9a"/>
<rect x="141" y="371" width="11" height="1" fill="#9a9a9a"/>
<rect x="141" y="310" width="11" height="1" fill="#9a9a9a"/>
<rect x="141" y="250" width="11" height="1" fill="#9a9a9a"/>
<rect x="141" y="190" width="11" height="1" fill="#9a9a9a"/>
<rect x="141" y="129" width="11" height="1" fill="#9a9a9a"/>
<rect x="141" y="69" width="11" height="1" fill="#9a9a9a"/>
<rect x="153" y="674" width="1" height="10" fill="#c8c8c8"/>
<rect x="247" y="674" width="1" height="10" fill="#c8c8c8"/>
<rect x="340" y="674" width="1" height="10" fill="#c8c8c8"/>
<rect x="434" y="674" width="1" height="10" fill="#c8c8c8"/>
<rect x="528" y="674" width="1" height="10" fill="#c8c8c8"/>
<rect x="621" y="674" width="1" height="10" fill="#c8c8c8"/>
<rect x="715" y="674" width="1" height="10" fill="#c8c8c8"/>
<rect x="808" y="674" width="1" height="10" fill="#c8c8c8"/>
<rect x="902" y="674" width="1" height="10" fill="#c8c8c8"/>
<rect x="996" y="674" width="1" height="10" fill="#c8c8c8"/>
<rect x="1089" y="674" width="1" height="10" fill="#c8c8c8"/>
<rect x="1183" y="674" width="1" height="10" fill="#c8c8c8"/>
<rect x="1276" y="674" width="1" height="10" fill="#c8c8c8"/>
<rect x="1370" y="674" width="1" height="10" fill="#c8c8c8"/>
<rect x="1464" y="674" width="1" height="10" fill="#c8c8c8"/>
<rect x="1557" y="674" width="1" height="10" fill="#c8c8c8"/>
<rect x="1651" y="674" width="1" height="10" fill="#c8c8c8"/>
<rect x="1745" y="674" width="1" height="10" fill="#c8c8c8"/>
<rect x="1838" y="674" width="1" height="10" fill="#c8c8c8"/>
<rect x="1932" y="674" width="1" height="10" fill="#c8c8c8"/>
<rect x="2026" y="674" width="1" height="10" fill="#c8c8c8"/>
<rect x="2119" y="674" width="1" height="10" fill="#c8c8c8"/>
<rect x="2213" y="674" width="1" height="10" fill="#c8c8c8"/>
<rect x="2306" y="674" width="1" height="10" fill="#c8c8c8"/>
<rect x="2400" y="674" width="1" height="10" fill="#c8c8c8"/>
<text x="131.5" y="678.2" font-size="18.3" fill="#333333" text-anchor="end" textLength="11.2" lengthAdjust="spacingAndGlyphs">0</text>
<text x="131.5" y="618.2" font-size="18.3" fill="#333333" text-anchor="end" textLength="11.2" lengthAdjust="spacingAndGlyphs">1</text>
<text x="131.5" y="558.2" font-size="18.3" fill="#333333" text-anchor="end" textLength="11.2" lengthAdjust="spacingAndGlyphs">2</text>
<text x="131.5" y="497.2" font-size="18.3" fill="#333333" text-anchor="end" textLength="11.2" lengthAdjust="spacingAndGlyphs">3</text>
<text x="131.5" y="437.2" font-size="18.3" fill="#333333" text-anchor="end" textLength="11.2" lengthAdjust="spacingAndGlyphs">4</text>
<text x="131.5" y="377.2" font-size="18.3" fill="#333333" text-anchor="end" textLength="11.2" lengthAdjust="spacingAndGlyphs">5</text>
<text x="131.5" y="316.2" font-size="18.3" fill="#333333" text-anchor="end" textLength="11.2" lengthAdjust="spacingAndGlyphs">6</text>
<text x="131.5" y="256.2" font-size="18.3" fill="#333333" text-anchor="end" textLength="11.2" lengthAdjust="spacingAndGlyphs">7</text>
<text x="131.5" y="196.2" font-size="18.3" fill="#333333" text-anchor="end" textLength="11.2" lengthAdjust="spacingAndGlyphs">8</text>
<text x="131.5" y="135.2" font-size="18.3" fill="#333333" text-anchor="end" textLength="11.2" lengthAdjust="spacingAndGlyphs">9</text>
<text x="131.5" y="75.2" font-size="18.3" fill="#333333" text-anchor="end" textLength="22.4" lengthAdjust="spacingAndGlyphs">10</text>
<text x="153.5" y="706.8" font-size="18.6" fill="#1a1a1a" stroke="#1a1a1a" stroke-width="0.3" text-anchor="middle" textLength="22.2" lengthAdjust="spacingAndGlyphs">0h</text>
<text x="247.5" y="706.8" font-size="18.6" fill="#1a1a1a" stroke="#1a1a1a" stroke-width="0.3" text-anchor="middle" textLength="22.2" lengthAdjust="spacingAndGlyphs">1h</text>
<text x="340.5" y="706.8" font-size="18.6" fill="#1a1a1a" stroke="#1a1a1a" stroke-width="0.3" text-anchor="middle" textLength="22.2" lengthAdjust="spacingAndGlyphs">2h</text>
<text x="434.5" y="706.8" font-size="18.6" fill="#1a1a1a" stroke="#1a1a1a" stroke-width="0.3" text-anchor="middle" textLength="22.2" lengthAdjust="spacingAndGlyphs">3h</text>
<text x="528.5" y="706.8" font-size="18.6" fill="#1a1a1a" stroke="#1a1a1a" stroke-width="0.3" text-anchor="middle" textLength="22.2" lengthAdjust="spacingAndGlyphs">4h</text>
<text x="621.5" y="706.8" font-size="18.6" fill="#1a1a1a" stroke="#1a1a1a" stroke-width="0.3" text-anchor="middle" textLength="22.2" lengthAdjust="spacingAndGlyphs">5h</text>
<text x="715.5" y="706.8" font-size="18.6" fill="#1a1a1a" stroke="#1a1a1a" stroke-width="0.3" text-anchor="middle" textLength="22.2" lengthAdjust="spacingAndGlyphs">6h</text>
<text x="808.5" y="706.8" font-size="18.6" fill="#1a1a1a" stroke="#1a1a1a" stroke-width="0.3" text-anchor="middle" textLength="22.2" lengthAdjust="spacingAndGlyphs">7h</text>
<text x="902.5" y="706.8" font-size="18.6" fill="#1a1a1a" stroke="#1a1a1a" stroke-width="0.3" text-anchor="middle" textLength="22.2" lengthAdjust="spacingAndGlyphs">8h</text>
<text x="996.5" y="706.8" font-size="18.6" fill="#1a1a1a" stroke="#1a1a1a" stroke-width="0.3" text-anchor="middle" textLength="22.2" lengthAdjust="spacingAndGlyphs">9h</text>
<text x="1089.5" y="706.8" font-size="18.6" fill="#1a1a1a" stroke="#1a1a1a" stroke-width="0.3" text-anchor="middle" textLength="33.3" lengthAdjust="spacingAndGlyphs">10h</text>
<text x="1183.5" y="706.8" font-size="18.6" fill="#1a1a1a" stroke="#1a1a1a" stroke-width="0.3" text-anchor="middle" textLength="33.3" lengthAdjust="spacingAndGlyphs">11h</text>
<text x="1276.5" y="706.8" font-size="18.6" fill="#1a1a1a" stroke="#1a1a1a" stroke-width="0.3" text-anchor="middle" textLength="33.3" lengthAdjust="spacingAndGlyphs">12h</text>
<text x="1370.5" y="706.8" font-size="18.6" fill="#1a1a1a" stroke="#1a1a1a" stroke-width="0.3" text-anchor="middle" textLength="33.3" lengthAdjust="spacingAndGlyphs">13h</text>
<text x="1464.5" y="706.8" font-size="18.6" fill="#1a1a1a" stroke="#1a1a1a" stroke-width="0.3" text-anchor="middle" textLength="33.3" lengthAdjust="spacingAndGlyphs">14h</text>
<text x="1557.5" y="706.8" font-size="18.6" fill="#1a1a1a" stroke="#1a1a1a" stroke-width="0.3" text-anchor="middle" textLength="33.3" lengthAdjust="spacingAndGlyphs">15h</text>
<text x="1651.5" y="706.8" font-size="18.6" fill="#1a1a1a" stroke="#1a1a1a" stroke-width="0.3" text-anchor="middle" textLength="33.3" lengthAdjust="spacingAndGlyphs">16h</text>
<text x="1745.5" y="706.8" font-size="18.6" fill="#1a1a1a" stroke="#1a1a1a" stroke-width="0.3" text-anchor="middle" textLength="33.3" lengthAdjust="spacingAndGlyphs">17h</text>
<text x="1838.5" y="706.8" font-size="18.6" fill="#1a1a1a" stroke="#1a1a1a" stroke-width="0.3" text-anchor="middle" textLength="33.3" lengthAdjust="spacingAndGlyphs">18h</text>
<text x="1932.5" y="706.8" font-size="18.6" fill="#1a1a1a" stroke="#1a1a1a" stroke-width="0.3" text-anchor="middle" textLength="33.3" lengthAdjust="spacingAndGlyphs">19h</text>
<text x="2026.5" y="706.8" font-size="18.6" fill="#1a1a1a" stroke="#1a1a1a" stroke-width="0.3" text-anchor="middle" textLength="33.3" lengthAdjust="spacingAndGlyphs">20h</text>
<text x="2119.5" y="706.8" font-size="18.6" fill="#1a1a1a" stroke="#1a1a1a" stroke-width="0.3" text-anchor="middle" textLength="33.3" lengthAdjust="spacingAndGlyphs">21h</text>
<text x="2213.5" y="706.8" font-size="18.6" fill="#1a1a1a" stroke="#1a1a1a" stroke-width="0.3" text-anchor="middle" textLength="33.3" lengthAdjust="spacingAndGlyphs">22h</text>
<text x="2306.5" y="706.8" font-size="18.6" fill="#1a1a1a" stroke="#1a1a1a" stroke-width="0.3" text-anchor="middle" textLength="33.3" lengthAdjust="spacingAndGlyphs">23h</text>
<text x="2400.5" y="706.8" font-size="18.6" fill="#1a1a1a" stroke="#1a1a1a" stroke-width="0.3" text-anchor="middle" textLength="22.2" lengthAdjust="spacingAndGlyphs">0h</text>
<text transform="translate(85.5,371) rotate(-90)" font-size="22.3" fill="#333333" text-anchor="middle" textLength="29" lengthAdjust="spacingAndGlyphs">kW</text>
<rect x="1048" y="542.5" width="522" height="70" rx="7" fill="#fff" fill-opacity="0.9"/>
<text x="1137.5" y="588.5" font-size="30" font-weight="bold" fill="#111" textLength="353" lengthAdjust="spacingAndGlyphs">dimanche 12 avril 2026</text>
<text x="2112" y="89" font-size="24.7" font-weight="bold" fill="#000" textLength="172" lengthAdjust="spacingAndGlyphs">LHB-site-L636</text>
<rect x="1992.2" y="108" width="411.6" height="57.6" rx="10" fill="#fff" stroke="#7f7f7f" stroke-width="3.4"/>
<text x="2052.5" y="148.3" font-size="28.5" fill="#000" textLength="311" lengthAdjust="spacingAndGlyphs" xml:space="preserve">Consommation: 109 kWh</text>
<rect x="1992.2" y="177.7" width="411.6" height="57.6" rx="10" fill="#fff" stroke="#7f7f7f" stroke-width="3.4"/>
<text x="2122" y="218" font-size="28.5" fill="#000" textLength="172" lengthAdjust="spacingAndGlyphs" xml:space="preserve">P Max :  9 kW</text>
<rect x="1992.2" y="248.2" width="411.6" height="57.6" rx="10" fill="#fff" stroke="#7f7f7f" stroke-width="3.4"/>
<text x="2128.8" y="288.5" font-size="28.5" fill="#000" textLength="158.4" lengthAdjust="spacingAndGlyphs" xml:space="preserve">P min : 3 kW</text>
<rect x="176.6" y="49" width="481.4" height="77.6" fill="#0a0a1a"/>
<g fill="none" stroke="url(#eco)" stroke-width="7" stroke-linecap="round" stroke-linejoin="round">
<path d="M192,94 H211 A9.5,12.2 0 1 0 209.5,103.5"/>
<path d="M198,73.5 L205,71"/>
<path d="M237.5,87.5 A9.8,12.2 0 1 0 237.5,101.5"/>
<ellipse cx="257.3" cy="94.5" rx="10.2" ry="12.2"/>
</g>
<g fill="none" stroke="#fff" stroke-width="6.6" stroke-linecap="round" stroke-linejoin="round">
<path d="M277.5,86.5 L284,104.5 L291.5,83.5 L299,104.5 L313.5,69"/>
<path d="M315.5,87.5 Q323,83.5 329.5,85.5 Q334.5,87.5 334.5,94 V107"/>
<ellipse cx="323.5" cy="100.3" rx="8.3" ry="6.6"/>
<path d="M342.5,81.8 H371"/>
<path d="M346.5,75 V100 Q346.5,106.5 353.5,106.5"/>
<path d="M362,75 V100 Q362,106.5 369,106.5"/>
</g>
<ellipse cx="434" cy="89" rx="26" ry="27.5" fill="#00b2e3"/>
<g fill="none" stroke="#fff" stroke-width="1.6" stroke-linejoin="round">
<path d="M419.5,96.5 V80 H425 Q430,80 430,84.5 Q430,89 425,89 H419.5 M424.5,89 L431,96.5"/>
<path d="M434.5,81.5 V96.5 M430,88.5 H438"/>
<path d="M440,90 H450 Q450,84.5 445,84.5 Q440,84.5 440,90.5 Q440,96.5 445.5,96.5 H450"/>
</g>
<text x="468" y="78.5" font-size="11.5" fill="#00a6d6" stroke="#00a6d6" stroke-width="0.25" textLength="48.4" lengthAdjust="spacingAndGlyphs">Le réseau</text>
<text x="468" y="90.5" font-size="11.5" fill="#00a6d6" stroke="#00a6d6" stroke-width="0.25" textLength="61.3" lengthAdjust="spacingAndGlyphs">de transport</text>
<text x="468" y="102.5" font-size="11.5" fill="#00a6d6" stroke="#00a6d6" stroke-width="0.25" textLength="57.3" lengthAdjust="spacingAndGlyphs">d’électricité</text>
<rect x="546.4" y="61.3" width="100.5" height="55.4" fill="#fff"/>
<rect x="553" y="68" width="5" height="6" fill="#2a3d8f"/><rect x="558" y="68" width="3" height="6" fill="#ddd"/><rect x="561" y="68" width="6" height="6" fill="#e1000f"/>
<text x="553" y="85" font-size="7" font-weight="bold" fill="#333" textLength="44" lengthAdjust="spacingAndGlyphs">RÉPUBLIQUE</text>
<text x="553" y="92.8" font-size="7" font-weight="bold" fill="#333" textLength="40" lengthAdjust="spacingAndGlyphs">FRANÇAISE</text>
<text x="553" y="98" font-size="3.5" font-style="italic" fill="#666">Liberté</text><text x="553" y="103" font-size="3.5" font-style="italic" fill="#666">Égalité</text><text x="553" y="108" font-size="3.5" font-style="italic" fill="#666">Fraternité</text>
<rect x="607.5" y="66.5" width="34" height="45" fill="#fff" stroke="#3a6fc0" stroke-width="1"/>
<text x="624.5" y="75" font-size="6.5" font-weight="bold" fill="#e2231a" text-anchor="middle" textLength="24" lengthAdjust="spacingAndGlyphs">ADEME</text>
<circle cx="624.3" cy="87.3" r="8.5" fill="#2a5bb8"/>
<path d="M621,82 q3,2 2,5 q-2,3 1,6 M627,84 q-1,3 1,5" stroke="#9ec3ea" stroke-width="1.2" fill="none"/>
<rect x="612.5" y="100" width="24" height="1.3" fill="#e2231a" opacity="0.55"/>
<rect x="612.5" y="103.3" width="24" height="1.3" fill="#e2231a" opacity="0.55"/>
<rect x="612.5" y="106.6" width="24" height="1.3" fill="#e2231a" opacity="0.55"/>
<rect x="169" y="135.2" width="491.6" height="123.8" fill="#d9d9d9"/>
<rect x="172.6" y="138.8" width="116.4" height="50.2" fill="#f1f1f1"/>
<rect x="172.6" y="192.4" width="116.4" height="61" fill="#f3f3f3"/>
<rect x="294.4" y="138.8" width="117.4" height="50.2" fill="#f1f1f1"/>
<rect x="294.4" y="192.4" width="117.4" height="61" fill="#fdfdfd"/>
<rect x="416.9" y="138.8" width="116.4" height="50.2" fill="#f1f1f1"/>
<rect x="416.9" y="192.4" width="116.4" height="61" fill="#fdfdfd"/>
<rect x="538.8" y="138.8" width="116.7" height="50.2" fill="#f1f1f1"/>
<rect x="538.8" y="192.4" width="116.7" height="61" fill="#fdfdfd"/>
<g transform="translate(179.9,195)">
<rect x="0" y="0" width="106" height="55" fill="url(#teal)"/>
<path d="M16,0 Q62,44 106,16 L106,0 Z" fill="#00efc9"/>
<path d="M29,0 Q65,22 106,4 L106,0 Z" fill="#00a08a"/>
</g>
<g transform="translate(302.2,196)">
<rect x="0" y="0" width="105.6" height="56" fill="url(#teal)"/>
<path d="M16,0 Q62,44 105.6,16 L105.6,0 Z" fill="#00efc9"/>
<path d="M29,0 Q65,22 105.6,4 L105.6,0 Z" fill="#00a08a"/>
</g>
<g transform="translate(424,196)">
<rect x="0" y="0" width="106" height="56" fill="url(#teal)"/>
<path d="M16,0 Q62,44 106,16 L106,0 Z" fill="#00efc9"/>
<path d="M29,0 Q65,22 106,4 L106,0 Z" fill="#00a08a"/>
</g>
<g transform="translate(543.8,196)">
<rect x="0" y="0" width="106" height="56" fill="url(#teal)"/>
<path d="M16,0 Q62,44 106,16 L106,0 Z" fill="#00efc9"/>
<path d="M29,0 Q65,22 106,4 L106,0 Z" fill="#00a08a"/>
</g>
<text x="221.5" y="174.8" font-size="33" fill="#111" textLength="18" lengthAdjust="spacingAndGlyphs">J</text>
<text x="310.8" y="174.8" font-size="33" fill="#111" textLength="18" lengthAdjust="spacingAndGlyphs">J</text>
<path d="M345.8,164 H361.8 M353.8,155.5 V172.5" stroke="#222" stroke-width="2.3" fill="none"/>
<path d="M382.5,157.5 L388.3,152.5 V174.8" fill="none" stroke="#222" stroke-width="2.4" stroke-linejoin="round"/>
<text x="432.7" y="174.8" font-size="33" fill="#111" textLength="18" lengthAdjust="spacingAndGlyphs">J</text>
<path d="M467.7,164 H483.7 M475.7,155.5 V172.5" stroke="#222" stroke-width="2.3" fill="none"/>
<text x="499.2" y="174.8" font-size="33" font-weight="bold" fill="#111" textLength="19" lengthAdjust="spacingAndGlyphs">2</text>
<text x="554.5" y="174.8" font-size="33" fill="#111" textLength="18" lengthAdjust="spacingAndGlyphs">J</text>
<path d="M590.5,164 H606.5 M598.5,155.5 V172.5" stroke="#222" stroke-width="2.3" fill="none"/>
<text x="621" y="174.8" font-size="33" font-weight="bold" fill="#111" textLength="19" lengthAdjust="spacingAndGlyphs">3</text>
<rect x="168" y="1236" width="2248" height="84" fill="#efefef"/>
<rect x="168" y="1152" width="321" height="84" fill="#efefef"/>
<rect x="810" y="1152" width="321" height="84" fill="#efefef"/>
<rect x="1453" y="1152" width="321" height="84" fill="#efefef"/>
<rect x="2095" y="1152" width="321" height="84" fill="#efefef"/>
<rect x="489" y="1152" width="1" height="84" fill="#d4d4d4"/>
<rect x="810" y="1152" width="1" height="84" fill="#d4d4d4"/>
<rect x="1131" y="1152" width="1" height="84" fill="#d4d4d4"/>
<rect x="1453" y="1152" width="1" height="84" fill="#d4d4d4"/>
<rect x="1774" y="1152" width="1" height="84" fill="#d4d4d4"/>
<rect x="2095" y="1152" width="1" height="84" fill="#d4d4d4"/>
<rect x="168" y="1068" width="2248" height="84" fill="#efefef"/>
<rect x="168" y="984" width="321" height="84" fill="#efefef"/>
<rect x="810" y="984" width="321" height="84" fill="#efefef"/>
<rect x="1453" y="984" width="321" height="84" fill="#efefef"/>
<rect x="2095" y="984" width="321" height="84" fill="#efefef"/>
<rect x="489" y="984" width="1" height="84" fill="#d4d4d4"/>
<rect x="810" y="984" width="1" height="84" fill="#d4d4d4"/>
<rect x="1131" y="984" width="1" height="84" fill="#d4d4d4"/>
<rect x="1453" y="984" width="1" height="84" fill="#d4d4d4"/>
<rect x="1774" y="984" width="1" height="84" fill="#d4d4d4"/>
<rect x="2095" y="984" width="1" height="84" fill="#d4d4d4"/>
<rect x="168" y="900" width="2248" height="84" fill="#efefef"/>
<rect x="168" y="815" width="321" height="85" fill="#efefef"/>
<rect x="810" y="815" width="321" height="85" fill="#efefef"/>
<rect x="1453" y="815" width="321" height="85" fill="#efefef"/>
<rect x="2095" y="815" width="321" height="85" fill="#efefef"/>
<rect x="489" y="815" width="1" height="85" fill="#d4d4d4"/>
<rect x="810" y="815" width="1" height="85" fill="#d4d4d4"/>
<rect x="1131" y="815" width="1" height="85" fill="#d4d4d4"/>
<rect x="1453" y="815" width="1" height="85" fill="#d4d4d4"/>
<rect x="1774" y="815" width="1" height="85" fill="#d4d4d4"/>
<rect x="2095" y="815" width="1" height="85" fill="#d4d4d4"/>
<rect x="168" y="1236" width="2248" height="1" fill="#c8c8c8"/>
<rect x="168" y="1152" width="2248" height="1" fill="#c8c8c8"/>
<rect x="168" y="1068" width="2248" height="1" fill="#c8c8c8"/>
<rect x="168" y="984" width="2248" height="1" fill="#c8c8c8"/>
<rect x="168" y="900" width="2248" height="1" fill="#c8c8c8"/>
<rect x="168" y="815" width="2248" height="1" fill="#c8c8c8"/>
<path d="M168,1320V1311.59H169V1311.59H170V1311.59H171V1311.59H172V1311.59H173V1311.59H174V1311.59H175V1311.59H176V1311.59H177V1311.59H178V1307.39H179V1307.39H180V1311.59H181V1311.59H182V1311.59H183V1311.59H184V1311.59H185V1311.59H186V1311.59H187V1311.59H188V1311.59H189V1311.59H190V1307.39H191V1307.39H192V1307.39H193V1311.59H194V1311.59H195V1311.59H196V1311.59H197V1311.59H198V1311.59H199V1311.59H200V1307.39H201V1307.39H202V1307.39H203V1311.59H204V1311.59H205V1311.59H206V1307.39H207V1307.39H208V1307.39H209V1311.59H210V1303.18H211V1303.18H212V1307.39H213V1307.39H214V1307.39H215V1307.39H216V1307.39H217V1303.18H218V1303.18H219V1307.39H220V1307.39H221V1307.39H222V1303.18H223V1303.18H224V1303.18H225V1307.39H226V1307.39H227V1303.18H228V1303.18H229V1307.39H230V1307.39H231V1303.18H232V1303.18H233V1303.18H234V1303.18H235V1307.39H236V1307.39H237V1307.39H238V1307.39H239V1307.39H240V1307.39H241V1307.39H242V1307.39H243V1307.39H244V1307.39H245V1307.39H246V1307.39H247V1307.39H248V1307.39H249V1320ZM396,1320V1311.59H397V1311.59H398V1311.59H399V1311.59H400V1311.59H401V1311.59H402V1311.59H403V1311.59H404V1311.59H405V1311.59H406V1311.59H407V1311.59H408V1311.59H409V1311.59H410V1311.59H411V1307.39H412V1307.39H413V1307.39H414V1307.39H415V1307.39H416V1307.39H417V1307.39H418V1307.39H419V1311.59H420V1311.59H421V1309.49H422V1309.49H423V1309.49H424V1309.49H425V1309.49H426V1309.49H427V1309.49H428V1309.49H429V1309.49H430V1307.39H431V1303.18H432V1303.18H433V1303.18H434V1307.39H435V1307.39H436V1307.39H437V1307.39H438V1307.39H439V1303.18H440V1303.18H441V1307.39H442V1307.39H443V1307.39H444V1307.39H445V1307.39H446V1307.39H447V1307.39H448V1307.39H449V1307.39H450V1307.39H451V1294.77H452V1294.77H453V1307.39H454V1307.39H455V1307.39H456V1307.39H457V1303.18H458V1303.18H459V1303.18H460V1303.18H461V1307.39H462V1307.39H463V1307.39H464V1307.39H465V1307.39H466V1307.39H467V1307.39H468V1307.39H469V1307.39H470V1307.39H471V1307.39H472V1307.39H473V1307.39H474V1307.39H475V1307.39H476V1307.39H477V1307.39H478V1307.39H479V1307.39H480V1303.18H481V1303.18H482V1303.18H483V1303.18H484V1307.39H485V1307.39H486V1307.39H487V1307.39H488V1307.39H489V1307.39H490V1307.39H491V1307.39H492V1307.39H493V1311.59H494V1311.59H495V1311.59H496V1311.59H497V1311.59H498V1311.59H499V1311.59H500V1311.59H501V1311.59H502V1311.59H503V1311.59H504V1311.59H505V1311.59H506V1311.59H507V1311.59H508V1311.59H509V1311.59H510V1311.59H511V1311.59H512V1311.59H513V1311.59H514V1311.59H515V1311.59H516V1311.59H517V1311.59H518V1311.59H519V1311.59H520V1311.59H521V1311.59H522V1307.39H523V1307.39H524V1307.39H525V1307.39H526V1311.59H527V1311.59H528V1311.59H529V1311.59H530V1311.59H531V1311.59H532V1311.59H533V1307.39H534V1307.39H535V1307.39H536V1307.39H537V1311.59H538V1311.59H539V1311.59H540V1307.39H541V1307.39H542V1307.39H543V1307.39H544V1307.39H545V1307.39H546V1307.39H547V1303.18H548V1303.18H549V1307.39H550V1307.39H551V1307.39H552V1303.18H553V1303.18H554V1303.18H555V1303.18H556V1303.18H557V1303.18H558V1307.39H559V1307.39H560V1307.39H561V1307.39H562V1307.39H563V1307.39H564V1307.39H565V1304.23H566V1302.13H567V1300.03H568V1311.59H569V1220.36H570V1320ZM716,1320V1206.49H717V1206.49H718V1206.49H719V1206.49H720V1206.49H721V1212.79H722V1212.79H723V1212.79H724V1212.79H725V1227.51H726V1227.51H727V1227.51H728V1277.96H729V1277.96H730V1303.18H731V1307.39H732V1303.18H733V1303.18H734V1303.18H735V1303.18H736V1307.39H737V1307.39H738V1307.39H739V1307.39H740V1307.39H741V1307.39H742V1307.39H743V1307.39H744V1307.39H745V1307.39H746V1307.39H747V1307.39H748V1307.39H749V1307.39H750V1307.39H751V1307.39H752V1307.39H753V1307.39H754V1298.98H755V1307.39H756V1307.39H757V1298.98H758V1307.39H759V1307.39H760V1307.39H761V1307.39H762V1307.39H763V1303.18H764V1303.18H765V1303.18H766V1307.39H767V1307.39H768V1307.39H769V1307.39H770V1307.39H771V1307.39H772V1307.39H773V1307.39H774V1303.18H775V1303.18H776V1307.39H777V1307.39H778V1307.39H779V1307.39H780V1307.39H781V1307.39H782V1307.39H783V1307.39H784V1307.39H785V1307.39H786V1307.39H787V1307.39H788V1307.39H789V1303.18H790V1303.18H791V1303.18H792V1303.18H793V1307.39H794V1307.39H795V1307.39H796V1307.39H797V1303.18H798V1303.18H799V1303.18H800V1307.39H801V1307.39H802V1307.39H803V1307.39H804V1307.39H805V1307.39H806V1307.39H807V1298.98H808V1298.98H809V1307.39H810V1311.59H811V1311.59H812V1311.59H813V1311.59H814V1311.59H815V1311.59H816V1311.59H817V1311.59H818V1311.59H819V1311.59H820V1311.59H821V1311.59H822V1311.59H823V1311.59H824V1311.59H825V1311.59H826V1311.59H827V1311.59H828V1311.59H829V1311.59H830V1311.59H831V1311.59H832V1303.18H833V1303.18H834V1311.59H835V1307.39H836V1307.39H837V1307.39H838V1311.59H839V1311.59H840V1311.59H841V1311.59H842V1311.59H843V1311.59H844V1311.59H845V1311.59H846V1311.59H847V1311.59H848V1307.39H849V1307.39H850V1307.39H851V1311.59H852V1311.59H853V1307.39H854V1307.39H855V1307.39H856V1307.39H857V1307.39H858V1307.39H859V1307.39H860V1311.59H861V1311.59H862V1311.59H863V1311.59H864V1311.59H865V1307.39H866V1307.39H867V1307.39H868V1303.18H869V1303.18H870V1307.39H871V1307.39H872V1307.39H873V1307.39H874V1307.39H875V1307.39H876V1307.39H877V1307.39H878V1307.39H879V1307.39H880V1307.39H881V1307.39H882V1307.39H883V1307.39H884V1307.39H885V1307.39H886V1307.39H887V1307.39H888V1298.98H889V1298.98H890V1303.18H891V1286.37H892V1320ZM1038,1320V1190.51H1039V1190.51H1040V1211.95H1041V1211.95H1042V1211.95H1043V1228.77H1044V1228.77H1045V1228.77H1046V1303.18H1047V1303.18H1048V1303.18H1049V1307.39H1050V1307.39H1051V1307.39H1052V1307.39H1053V1294.77H1054V1303.18H1055V1311.59H1056V1311.59H1057V1311.59H1058V1307.39H1059V1307.39H1060V1307.39H1061V1307.39H1062V1311.59H1063V1311.59H1064V1311.59H1065V1311.59H1066V1307.39H1067V1307.39H1068V1311.59H1069V1307.39H1070V1307.39H1071V1307.39H1072V1307.39H1073V1307.39H1074V1307.39H1075V1307.39H1076V1307.39H1077V1307.39H1078V1307.39H1079V1307.39H1080V1307.39H1081V1307.39H1082V1307.39H1083V1307.39H1084V1307.39H1085V1307.39H1086V1307.39H1087V1307.39H1088V1307.39H1089V1307.39H1090V1307.39H1091V1307.39H1092V1307.39H1093V1307.39H1094V1307.39H1095V1307.39H1096V1307.39H1097V1307.39H1098V1307.39H1099V1307.39H1100V1307.39H1101V1303.18H1102V1303.18H1103V1307.39H1104V1303.18H1105V1303.18H1106V1307.39H1107V1307.39H1108V1307.39H1109V1307.39H1110V1307.39H1111V1307.39H1112V1307.39H1113V1307.39H1114V1307.39H1115V1307.39H1116V1307.39H1117V1307.39H1118V1307.39H1119V1307.39H1120V1307.39H1121V1307.39H1122V1307.39H1123V1307.39H1124V1307.39H1125V1307.39H1126V1307.39H1127V1307.39H1128V1307.39H1129V1307.39H1130V1311.59H1131V1311.59H1132V1311.59H1133V1311.59H1134V1311.59H1135V1311.59H1136V1311.59H1137V1311.59H1138V1311.59H1139V1311.59H1140V1311.59H1141V1311.59H1142V1311.59H1143V1307.39H1144V1307.39H1145V1307.39H1146V1307.39H1147V1307.39H1148V1307.39H1149V1307.39H1150V1311.59H1151V1311.59H1152V1311.59H1153V1311.59H1154V1311.59H1155V1311.59H1156V1311.59H1157V1311.59H1158V1311.59H1159V1311.59H1160V1311.59H1161V1311.59H1162V1311.59H1163V1311.59H1164V1311.59H1165V1311.59H1166V1311.59H1167V1311.59H1168V1311.59H1169V1311.59H1170V1311.59H1171V1311.59H1172V1311.59H1173V1311.59H1174V1311.59H1175V1311.59H1176V1311.59H1177V1311.59H1178V1311.59H1179V1311.59H1180V1311.59H1181V1311.59H1182V1311.59H1183V1311.59H1184V1307.39H1185V1307.39H1186V1307.39H1187V1307.39H1188V1307.39H1189V1307.39H1190V1294.77H1191V1298.98H1192V1298.98H1193V1298.98H1194V1298.98H1195V1298.98H1196V1298.98H1197V1307.39H1198V1298.98H1199V1298.98H1200V1298.98H1201V1294.77H1202V1307.39H1203V1307.39H1204V1307.39H1205V1307.39H1206V1307.39H1207V1307.39H1208V1307.39H1209V1307.39H1210V1307.39H1211V1307.39H1212V1320ZM1359,1320V1190.51H1360V1198.08H1361V1198.08H1362V1217H1363V1217H1364V1235.08H1365V1235.08H1366V1235.08H1367V1252.73H1368V1252.73H1369V1252.73H1370V1290.99H1371V1290.99H1372V1311.59H1373V1311.59H1374V1311.59H1375V1311.59H1376V1311.59H1377V1311.59H1378V1311.59H1379V1311.59H1380V1311.59H1381V1311.59H1382V1311.59H1383V1311.59H1384V1311.59H1385V1311.59H1386V1311.59H1387V1311.59H1388V1311.59H1389V1311.59H1390V1311.59H1391V1311.59H1392V1311.59H1393V1307.39H1394V1307.39H1395V1307.39H1396V1307.39H1397V1307.39H1398V1307.39H1399V1303.18H1400V1303.18H1401V1307.39H1402V1307.39H1403V1307.39H1404V1307.39H1405V1307.39H1406V1303.18H1407V1303.18H1408V1307.39H1409V1307.39H1410V1307.39H1411V1307.39H1412V1307.39H1413V1307.39H1414V1307.39H1415V1307.39H1416V1307.39H1417V1307.39H1418V1307.39H1419V1307.39H1420V1307.39H1421V1307.39H1422V1307.39H1423V1307.39H1424V1307.39H1425V1307.39H1426V1307.39H1427V1307.39H1428V1307.39H1429V1298.98H1430V1294.77H1431V1307.39H1432V1307.39H1433V1307.39H1434V1307.39H1435V1294.77H1436V1307.39H1437V1307.39H1438V1307.39H1439V1307.39H1440V1307.39H1441V1307.39H1442V1307.39H1443V1307.39H1444V1307.39H1445V1307.39H1446V1307.39H1447V1307.39H1448V1307.39H1449V1307.39H1450V1307.39H1451V1303.18H1452V1303.18H1453V1303.18H1454V1303.18H1455V1311.59H1456V1307.39H1457V1307.39H1458V1307.39H1459V1307.39H1460V1307.39H1461V1307.39H1462V1307.39H1463V1307.39H1464V1303.18H1465V1303.18H1466V1311.59H1467V1311.59H1468V1311.59H1469V1311.59H1470V1311.59H1471V1303.18H1472V1307.39H1473V1307.39H1474V1307.39H1475V1307.39H1476V1311.59H1477V1311.59H1478V1311.59H1479V1311.59H1480V1307.39H1481V1307.39H1482V1307.39H1483V1307.39H1484V1311.59H1485V1307.39H1486V1307.39H1487V1307.39H1488V1307.39H1489V1307.39H1490V1307.39H1491V1307.39H1492V1311.59H1493V1311.59H1494V1311.59H1495V1311.59H1496V1311.59H1497V1311.59H1498V1311.59H1499V1311.59H1500V1311.59H1501V1311.59H1502V1311.59H1503V1311.59H1504V1311.59H1505V1311.59H1506V1311.59H1507V1307.39H1508V1307.39H1509V1307.39H1510V1307.39H1511V1307.39H1512V1307.39H1513V1303.18H1514V1303.18H1515V1303.18H1516V1303.18H1517V1307.39H1518V1307.39H1519V1307.39H1520V1307.39H1521V1307.39H1522V1307.39H1523V1307.39H1524V1303.18H1525V1274.59H1526V1274.59H1527V1274.59H1528V1194.71H1529V1194.71H1530V1190.51H1531V1190.51H1532V1320ZM1680,1320V1307.39H1681V1307.39H1682V1311.59H1683V1311.59H1684V1311.59H1685V1311.59H1686V1307.39H1687V1307.39H1688V1307.39H1689V1307.39H1690V1311.59H1691V1311.59H1692V1311.59H1693V1311.59H1694V1311.59H1695V1311.59H1696V1311.59H1697V1311.59H1698V1311.59H1699V1311.59H1700V1311.59H1701V1311.59H1702V1311.59H1703V1311.59H1704V1311.59H1705V1311.59H1706V1311.59H1707V1311.59H1708V1311.59H1709V1311.59H1710V1311.59H1711V1311.59H1712V1311.59H1713V1311.59H1714V1311.59H1715V1311.59H1716V1307.39H1717V1303.18H1718V1303.18H1719V1303.18H1720V1307.39H1721V1307.39H1722V1307.39H1723V1307.39H1724V1307.39H1725V1307.39H1726V1307.39H1727V1307.39H1728V1307.39H1729V1307.39H1730V1307.39H1731V1307.39H1732V1307.39H1733V1307.39H1734V1307.39H1735V1303.18H1736V1303.18H1737V1303.18H1738V1303.18H1739V1307.39H1740V1307.39H1741V1298.98H1742V1307.39H1743V1307.39H1744V1307.39H1745V1307.39H1746V1307.39H1747V1307.39H1748V1307.39H1749V1307.39H1750V1307.39H1751V1307.39H1752V1307.39H1753V1307.39H1754V1307.39H1755V1307.39H1756V1307.39H1757V1307.39H1758V1307.39H1759V1307.39H1760V1307.39H1761V1307.39H1762V1307.39H1763V1307.39H1764V1303.18H1765V1303.18H1766V1303.18H1767V1307.39H1768V1307.39H1769V1307.39H1770V1307.39H1771V1307.39H1772V1307.39H1773V1311.59H1774V1311.59H1775V1311.59H1776V1311.59H1777V1311.59H1778V1311.59H1779V1307.39H1780V1307.39H1781V1311.59H1782V1311.59H1783V1311.59H1784V1311.59H1785V1311.59H1786V1311.59H1787V1311.59H1788V1307.39H1789V1307.39H1790V1307.39H1791V1311.59H1792V1311.59H1793V1307.39H1794V1307.39H1795V1307.39H1796V1307.39H1797V1311.59H1798V1311.59H1799V1311.59H1800V1311.59H1801V1311.59H1802V1311.59H1803V1311.59H1804V1311.59H1805V1311.59H1806V1311.59H1807V1311.59H1808V1311.59H1809V1311.59H1810V1311.59H1811V1311.59H1812V1303.18H1813V1311.59H1814V1311.59H1815V1311.59H1816V1311.59H1817V1311.59H1818V1311.59H1819V1311.59H1820V1307.39H1821V1307.39H1822V1307.39H1823V1307.39H1824V1311.59H1825V1311.59H1826V1311.59H1827V1311.59H1828V1303.18H1829V1303.18H1830V1311.59H1831V1311.59H1832V1311.59H1833V1303.18H1834V1303.18H1835V1311.59H1836V1311.59H1837V1311.59H1838V1311.59H1839V1311.59H1840V1311.59H1841V1311.59H1842V1307.39H1843V1307.39H1844V1307.39H1845V1311.59H1846V1311.59H1847V1311.59H1848V1307.39H1849V1307.39H1850V1307.39H1851V1307.39H1852V1307.39H1853V1307.39H1854V1307.39H1855V1311.59H1856V1311.59H1857V1311.59H1858V1311.59H1859V1311.59H1860V1307.39H1861V1307.39H1862V1307.39H1863V1311.59H1864V1311.59H1865V1311.59H1866V1311.59H1867V1311.59H1868V1311.59H1869V1311.59H1870V1311.59H1871V1311.59H1872V1311.59H1873V1311.59H1874V1311.59H1875V1311.59H1876V1311.59H1877V1311.59H1878V1311.59H1879V1311.59H1880V1311.59H1881V1311.59H1882V1311.59H1883V1307.39H1884V1307.39H1885V1307.39H1886V1311.59H1887V1311.59H1888V1311.59H1889V1311.59H1890V1311.59H1891V1311.59H1892V1311.59H1893V1311.59H1894V1311.59H1895V1311.59H1896V1311.59H1897V1311.59H1898V1311.59H1899V1311.59H1900V1311.59H1901V1311.59H1902V1311.59H1903V1311.59H1904V1311.59H1905V1311.59H1906V1311.59H1907V1311.59H1908V1311.59H1909V1311.59H1910V1311.59H1911V1311.59H1912V1311.59H1913V1311.59H1914V1303.18H1915V1311.59H1916V1307.39H1917V1307.39H1918V1307.39H1919V1311.59H1920V1311.59H1921V1311.59H1922V1311.59H1923V1311.59H1924V1311.59H1925V1311.59H1926V1311.59H1927V1303.18H1928V1311.59H1929V1307.39H1930V1307.39H1931V1307.39H1932V1307.39H1933V1311.59H1934V1311.59H1935V1311.59H1936V1311.59H1937V1311.59H1938V1311.59H1939V1311.59H1940V1311.59H1941V1311.59H1942V1311.59H1943V1311.59H1944V1311.59H1945V1311.59H1946V1311.59H1947V1311.59H1948V1311.59H1949V1311.59H1950V1311.59H1951V1311.59H1952V1311.59H1953V1311.59H1954V1311.59H1955V1311.59H1956V1311.59H1957V1311.59H1958V1311.59H1959V1311.59H1960V1311.59H1961V1311.59H1962V1307.39H1963V1307.39H1964V1311.59H1965V1311.59H1966V1311.59H1967V1311.59H1968V1307.39H1969V1307.39H1970V1307.39H1971V1307.39H1972V1311.59H1973V1311.59H1974V1311.59H1975V1307.39H1976V1307.39H1977V1307.39H1978V1311.59H1979V1311.59H1980V1311.59H1981V1311.59H1982V1311.59H1983V1311.59H1984V1307.39H1985V1307.39H1986V1307.39H1987V1307.39H1988V1311.59H1989V1311.59H1990V1311.59H1991V1311.59H1992V1311.59H1993V1311.59H1994V1311.59H1995V1311.59H1996V1311.59H1997V1311.59H1998V1311.59H1999V1311.59H2000V1311.59H2001V1311.59H2002V1311.59H2003V1311.59H2004V1311.59H2005V1311.59H2006V1311.59H2007V1311.59H2008V1311.59H2009V1311.59H2010V1311.59H2011V1311.59H2012V1307.39H2013V1307.39H2014V1307.39H2015V1307.39H2016V1311.59H2017V1311.59H2018V1311.59H2019V1311.59H2020V1307.39H2021V1307.39H2022V1307.39H2023V1307.39H2024V1311.59H2025V1311.59H2026V1311.59H2027V1311.59H2028V1311.59H2029V1311.59H2030V1311.59H2031V1311.59H2032V1311.59H2033V1311.59H2034V1307.39H2035V1307.39H2036V1311.59H2037V1311.59H2038V1311.59H2039V1311.59H2040V1311.59H2041V1311.59H2042V1311.59H2043V1311.59H2044V1311.59H2045V1311.59H2046V1307.39H2047V1307.39H2048V1307.39H2049V1311.59H2050V1311.59H2051V1311.59H2052V1311.59H2053V1311.59H2054V1311.59H2055V1311.59H2056V1311.59H2057V1311.59H2058V1311.59H2059V1311.59H2060V1311.59H2061V1311.59H2062V1307.39H2063V1307.39H2064V1307.39H2065V1311.59H2066V1311.59H2067V1311.59H2068V1311.59H2069V1311.59H2070V1311.59H2071V1311.59H2072V1307.39H2073V1303.18H2074V1303.18H2075V1303.18H2076V1307.39H2077V1307.39H2078V1307.39H2079V1307.39H2080V1307.39H2081V1307.39H2082V1307.39H2083V1307.39H2084V1307.39H2085V1307.39H2086V1307.39H2087V1307.39H2088V1307.39H2089V1307.39H2090V1307.39H2091V1307.39H2092V1307.39H2093V1307.39H2094V1307.39H2095V1307.39H2096V1307.39H2097V1307.39H2098V1307.39H2099V1307.39H2100V1307.39H2101V1307.39H2102V1307.39H2103V1307.39H2104V1307.39H2105V1307.39H2106V1307.39H2107V1295.62H2108V1299.82H2109V1299.82H2110V1299.82H2111V1304.02H2112V1291.41H2113V1291.41H2114V1304.02H2115V1304.02H2116V1304.02H2117V1304.02H2118V1304.02H2119V1304.02H2120V1304.02H2121V1295.62H2122V1295.62H2123V1295.62H2124V1295.62H2125V1304.02H2126V1299.82H2127V1299.82H2128V1299.82H2129V1299.82H2130V1304.02H2131V1304.02H2132V1304.02H2133V1304.02H2134V1299.82H2135V1299.82H2136V1299.82H2137V1299.82H2138V1304.02H2139V1304.02H2140V1304.02H2141V1304.02H2142V1304.02H2143V1304.02H2144V1304.02H2145V1304.02H2146V1304.02H2147V1304.02H2148V1304.02H2149V1304.02H2150V1304.02H2151V1291.41H2152V1304.02H2153V1304.02H2154V1304.02H2155V1304.02H2156V1304.02H2157V1304.02H2158V1299.82H2159V1299.82H2160V1299.82H2161V1304.02H2162V1304.02H2163V1304.02H2164V1304.02H2165V1299.82H2166V1299.82H2167V1299.82H2168V1299.82H2169V1304.02H2170V1304.02H2171V1295.62H2172V1304.02H2173V1304.02H2174V1304.02H2175V1304.02H2176V1304.02H2177V1304.02H2178V1304.02H2179V1304.02H2180V1304.02H2181V1304.02H2182V1299.82H2183V1299.82H2184V1299.82H2185V1299.82H2186V1304.02H2187V1304.02H2188V1304.02H2189V1295.62H2190V1295.62H2191V1304.02H2192V1304.02H2193V1304.02H2194V1295.62H2195V1295.62H2196V1300.66H2197V1288.89H2198V1288.89H2199V1300.66H2200V1300.66H2201V1300.66H2202V1300.66H2203V1300.66H2204V1300.66H2205V1300.66H2206V1300.66H2207V1300.66H2208V1300.66H2209V1293.09H2210V1300.66H2211V1300.66H2212V1300.66H2213V1300.66H2214V1300.66H2215V1300.66H2216V1300.66H2217V1300.66H2218V1300.66H2219V1300.66H2220V1300.66H2221V1300.66H2222V1300.66H2223V1300.66H2224V1300.66H2225V1300.66H2226V1300.66H2227V1300.66H2228V1300.66H2229V1293.09H2230V1300.66H2231V1297.3H2232V1297.3H2233V1297.3H2234V1297.3H2235V1300.66H2236V1300.66H2237V1300.66H2238V1300.66H2239V1300.66H2240V1300.66H2241V1288.89H2242V1300.66H2243V1300.66H2244V1300.66H2245V1300.66H2246V1300.66H2247V1300.66H2248V1300.66H2249V1300.66H2250V1297.3H2251V1297.3H2252V1297.3H2253V1297.3H2254V1297.3H2255V1300.66H2256V1300.66H2257V1300.66H2258V1300.66H2259V1300.66H2260V1300.66H2261V1300.66H2262V1300.66H2263V1300.66H2264V1300.66H2265V1297.3H2266V1297.3H2267V1300.66H2268V1297.3H2269V1297.3H2270V1297.3H2271V1297.3H2272V1300.66H2273V1297.3H2274V1297.3H2275V1300.66H2276V1300.66H2277V1297.3H2278V1297.3H2279V1297.3H2280V1297.3H2281V1300.66H2282V1300.66H2283V1300.66H2284V1300.66H2285V1300.66H2286V1300.66H2287V1300.66H2288V1300.66H2289V1300.66H2290V1300.66H2291V1300.66H2292V1297.3H2293V1297.3H2294V1300.66H2295V1300.66H2296V1300.66H2297V1300.66H2298V1288.89H2299V1300.66H2300V1293.09H2301V1300.66H2302V1297.3H2303V1297.3H2304V1297.3H2305V1297.3H2306V1300.66H2307V1297.3H2308V1297.3H2309V1297.3H2310V1300.66H2311V1297.3H2312V1297.3H2313V1297.3H2314V1300.66H2315V1288.89H2316V1297.3H2317V1297.3H2318V1297.3H2319V1297.3H2320V1300.66H2321V1293.09H2322V1293.09H2323V1300.66H2324V1300.66H2325V1297.3H2326V1297.3H2327V1297.3H2328V1300.66H2329V1300.66H2330V1300.66H2331V1300.66H2332V1297.3H2333V1297.3H2334V1297.3H2335V1300.66H2336V1300.66H2337V1300.66H2338V1293.09H2339V1300.66H2340V1297.3H2341V1297.3H2342V1297.3H2343V1293.09H2344V1300.66H2345V1300.66H2346V1300.66H2347V1300.66H2348V1300.66H2349V1300.66H2350V1300.66H2351V1284.68H2352V1300.66H2353V1300.66H2354V1300.66H2355V1300.66H2356V1297.3H2357V1297.3H2358V1297.3H2359V1300.66H2360V1300.66H2361V1300.66H2362V1300.66H2363V1300.66H2364V1300.66H2365V1300.66H2366V1300.66H2367V1300.66H2368V1300.66H2369V1297.3H2370V1297.3H2371V1297.3H2372V1293.09H2373V1293.09H2374V1300.66H2375V1297.3H2376V1297.3H2377V1297.3H2378V1297.3H2379V1297.3H2380V1297.3H2381V1297.3H2382V1297.3H2383V1297.3H2384V1300.66H2385V1300.66H2386V1300.66H2387V1300.66H2388V1288.89H2389V1293.09H2390V1293.09H2391V1300.66H2392V1300.66H2393V1300.66H2394V1297.3H2395V1297.3H2396V1297.3H2397V1300.66H2398V1297.3H2399V1297.3H2400V1297.3H2401V1300.66H2402V1300.66H2403V1300.66H2404V1293.09H2405V1293.09H2406V1300.66H2407V1300.66H2408V1293.09H2409V1300.66H2410V1300.66H2411V1300.66H2412V1300.66H2413V1288.89H2414V1288.89H2415V1300.66H2416V1320Z" fill="#a0ecc0"/>
<path d="M249,1320V1307.39H250V1307.39H251V1307.39H252V1307.39H253V1307.39H254V1290.57H255V1307.39H256V1303.18H257V1303.18H258V1303.18H259V1307.39H260V1303.18H261V1303.18H262V1303.18H263V1303.18H264V1303.18H265V1303.18H266V1303.18H267V1307.39H268V1307.39H269V1307.39H270V1307.39H271V1307.39H272V1307.39H273V1307.39H274V1307.39H275V1307.39H276V1307.39H277V1307.39H278V1307.39H279V1307.39H280V1307.39H281V1307.39H282V1307.39H283V1311.59H284V1311.59H285V1307.39H286V1307.39H287V1307.39H288V1311.59H289V1311.59H290V1311.59H291V1311.59H292V1311.59H293V1311.59H294V1311.59H295V1311.59H296V1307.39H297V1307.39H298V1307.39H299V1307.39H300V1311.59H301V1311.59H302V1307.39H303V1307.39H304V1307.39H305V1311.59H306V1307.39H307V1307.39H308V1307.39H309V1307.39H310V1307.39H311V1307.39H312V1311.59H313V1311.59H314V1307.39H315V1307.39H316V1307.39H317V1307.39H318V1311.59H319V1311.59H320V1311.59H321V1311.59H322V1311.59H323V1307.39H324V1307.39H325V1307.39H326V1311.59H327V1311.59H328V1307.39H329V1307.39H330V1307.39H331V1307.39H332V1307.39H333V1307.39H334V1307.39H335V1311.59H336V1307.39H337V1307.39H338V1311.59H339V1311.59H340V1311.59H341V1311.59H342V1311.59H343V1311.59H344V1311.59H345V1311.59H346V1311.59H347V1311.59H348V1311.59H349V1311.59H350V1311.59H351V1311.59H352V1311.59H353V1311.59H354V1311.59H355V1307.39H356V1307.39H357V1307.39H358V1311.59H359V1311.59H360V1311.59H361V1311.59H362V1311.59H363V1311.59H364V1311.59H365V1303.18H366V1311.59H367V1307.39H368V1307.39H369V1311.59H370V1311.59H371V1311.59H372V1311.59H373V1307.39H374V1307.39H375V1307.39H376V1307.39H377V1311.59H378V1311.59H379V1311.59H380V1311.59H381V1311.59H382V1311.59H383V1311.59H384V1311.59H385V1311.59H386V1311.59H387V1311.59H388V1311.59H389V1311.59H390V1311.59H391V1311.59H392V1311.59H393V1311.59H394V1311.59H395V1311.59H396V1320ZM570,1320V1220.36H571V1190.93H572V1190.93H573V1190.93H574V1182.1H575V1182.1H576V1190.93H577V1190.93H578V1190.93H579V1186.31H580V1186.31H581V966.85H582V966.85H583V963.48H584V963.48H585V1068.59H586V1068.59H587V988.29H588V996.28H589V996.28H590V971.05H591V971.05H592V1005.53H593V1005.53H594V1010.15H595V1043.78H596V1043.78H597V1046.31H598V1046.31H599V1047.15H600V1047.15H601V1093.39H602V1093.39H603V968.11H604V968.11H605V1047.15H606V1047.15H607V1064.38H608V1113.99H609V1113.99H610V1043.78H611V1084.56H612V1084.56H613V1193.03H614V1193.03H615V1190.93H616V1190.93H617V980.72H618V980.72H619V968.11H620V1082.46H621V1082.46H622V1224.99H623V1224.99H624V1224.99H625V1198.08H626V1198.08H627V1198.08H628V1156.04H629V1156.04H630V1156.04H631V1132.07H632V1132.07H633V1118.2H634V1118.2H635V1177.06H636V1177.06H637V1166.13H638V1166.13H639V1166.13H640V920.6H641V920.6H642V946.67H643V946.67H644V1005.53H645V1005.53H646V1046.31H647V1046.31H648V971.05H649V971.05H650V992.91H651V1000.9H652V1000.9H653V1122.82H654V1122.82H655V1138.38H656V1098.02H657V1098.02H658V1147.63H659V1147.63H660V1147.63H661V1147.63H662V1147.63H663V1056.4H664V1056.4H665V1072.37H666V1072.37H667V1127.45H668V1127.45H669V1013.51H670V1013.51H671V1034.96H672V1127.45H673V1127.45H674V1127.45H675V1014.35H676V1014.35H677V1051.77H678V1051.77H679V1055.14H680V1055.14H681V1088.77H682V1088.77H683V1209.01H684V1209.01H685V1143H686V1143H687V1143H688V929.43H689V929.43H690V962.22H691V1032.85H692V1032.85H693V1032.85H694V1032.85H695V1030.33H696V1030.33H697V1100.54H698V1100.54H699V1081.2H700V1081.2H701V1206.91H702V1206.91H703V1138.38H704V1025.71H705V1025.71H706V1000.9H707V1000.9H708V1043.78H709V1026.97H710V1026.97H711V1076.58H712V1182.1H713V1182.1H714V1182.1H715V1182.1H716V1320ZM892,1320V1261.14H893V1235.92H894V1210.69H895V1185.47H896V1156.04H897V1148.47H898V1148.47H899V1156.04H900V1156.04H901V1161.08H902V1161.08H903V1164.87H904V1164.87H905V1181.26H906V1050.51H907V1050.51H908V1042.52H909V1093.81H910V1093.81H911V1186.73H912V1186.73H913V1071.95H914V1033.69H915V1033.69H916V984.08H917V1005.53H918V1005.53H919V1068.17H920V1068.17H921V1050.51H922V1013.51H923V1013.51H924V980.3H925V980.3H926V1022.34H927V1022.34H928V1063.12H929V1033.69H930V1033.69H931V1156.04H932V1181.26H933V1181.26H934V1228.77H935V1228.77H936V1215.74H937V1220.78H938V1220.78H939V1223.3H940V1223.3H941V1206.91H942V1206.91H943V1009.73H944V1009.73H945V1022.34H946V1063.12H947V1063.12H948V942.04H949V942.04H950V899.58H951V899.58H952V1147.21H953V963.9H954V963.9H955V1064.38H956V1064.38H957V1070.69H958V1070.69H959V1064.38H960V1064.38H961V1177.48H962V1110.21H963V1110.21H964V1126.61H965V1126.61H966V1185.47H967V1215.74H968V1215.74H969V1228.77H970V1228.77H971V1228.77H972V1228.77H973V1223.3H974V1223.3H975V1203.12H976V1203.12H977V1205.65H978V1205.65H979V1017.3H980V1017.3H981V1060.6H982V1075.74H983V1075.74H984V1017.3H985V1017.3H986V1026.13H987V1026.13H988V1129.13H989V1064.38H990V1064.38H991V987.87H992V987.87H993V1164.87H994V1164.87H995V1106.43H996V1042.52H997V1042.52H998V1034.96H999V1164.87H1000V1164.87H1001V1205.65H1002V1059.34H1003V1059.34H1004V1198.08H1005V1172.43H1006V1172.43H1007V1101.38H1008V1101.38H1009V1000.9H1010V1000.9H1011V996.7H1012V1185.47H1013V1185.47H1014V1210.69H1015V1210.69H1016V1131.65H1017V1113.99H1018V1181.26H1019V1181.26H1020V1173.69H1021V1173.69H1022V1177.48H1023V1177.48H1024V1199.34H1025V1199.34H1026V1198.08H1027V899.58H1028V899.58H1029V1026.13H1030V1042.52H1031V1042.52H1032V1181.26H1033V1181.26H1034V1190.51H1035V1190.51H1036V1199.34H1037V1199.34H1038V1320ZM1212,1320V1307.39H1213V1301.08H1214V1199.34H1215V1199.34H1216V1177.9H1217V1177.9H1218V1194.29H1219V1194.29H1220V1190.51H1221V1190.51H1222V1186.73H1223V1186.73H1224V1123.24H1225V1123.24H1226V975.68H1227V975.68H1228V992.07H1229V1004.68H1230V1004.68H1231V1041.68H1232V1021.5H1233V1021.5H1234V1026.55H1235V1208.17H1236V1208.17H1237V1222.04H1238V1222.04H1239V1227.51H1240V1227.51H1241V1127.03H1242V1127.03H1243V1194.29H1244V1174.11H1245V1174.11H1246V1206.91H1247V1206.91H1248V1227.51H1249V1227.51H1250V1201.86H1251V1113.99H1252V1152.25H1253V1152.25H1254V1139.64H1255V1139.64H1256V1123.24H1257V1123.24H1258V1066.91H1259V1066.91H1260V1042.94H1261V1072.37H1262V1072.37H1263V1047.99H1264V1047.99H1265V1063.54H1266V1063.54H1267V1064.38H1268V1037.9H1269V1037.9H1270V1030.33H1271V1030.33H1272V1168.65H1273V1069.43H1274V988.29H1275V988.29H1276V1039.16H1277V1110.21H1278V1110.21H1279V1201.86H1280V1090.03H1281V1090.03H1282V1181.68H1283V1181.68H1284V1181.68H1285V1030.33H1286V1030.33H1287V1132.07H1288V1132.07H1289V1190.51H1290V1190.51H1291V1190.51H1292V1190.51H1293V1190.51H1294V1211.95H1295V1211.95H1296V1168.65H1297V1168.65H1298V1204.38H1299V1204.38H1300V1186.73H1301V1186.73H1302V1041.68H1303V1034.11H1304V1034.11H1305V1072.37H1306V1072.37H1307V1063.54H1308V1063.54H1309V1123.24H1310V1123.24H1311V1203.12H1312V1203.12H1313V1135.86H1314V1135.86H1315V1092.55H1316V1092.55H1317V1128.29H1318V1128.29H1319V1143.42H1320V1186.73H1321V1186.73H1322V1194.29H1323V1194.29H1324V1211.95H1325V1211.95H1326V997.12H1327V997.12H1328V1168.65H1329V1168.65H1330V1204.38H1331V1204.38H1332V1201.86H1333V1185.47H1334V1185.47H1335V1201.86H1336V1201.86H1337V1168.65H1338V1135.86H1339V1135.86H1340V1161.08H1341V1161.08H1342V1206.91H1343V1206.91H1344V1185.47H1345V1179.16H1346V1179.16H1347V1135.86H1348V1135.86H1349V971.89H1350V971.89H1351V1004.68H1352V1026.55H1353V1026.55H1354V1194.29H1355V1194.29H1356V1194.29H1357V1194.29H1358V1194.29H1359V1320ZM1532,1320V1311.59H1533V1143.84H1534V1135.44H1535V1135.44H1536V1164.44H1537V1164.44H1538V1169.91H1539V1169.91H1540V1198.92H1541V1211.11H1542V1211.11H1543V1198.92H1544V1198.92H1545V1203.12H1546V1203.12H1547V1241.38H1548V1260.72H1549V1260.72H1550V1280.06H1551V1266.19H1552V1026.97H1553V1026.97H1554V1043.36H1555V1043.36H1556V1186.31H1557V1186.31H1558V1198.92H1559V1198.92H1560V1219.52H1561V1219.52H1562V1227.93H1563V1227.93H1564V1215.32H1565V1215.32H1566V1186.31H1567V1059.76H1568V1059.76H1569V1013.09H1570V984.08H1571V984.08H1572V1018.56H1573V1018.56H1574V950.45H1575V950.45H1576V1186.31H1577V1161.5H1578V1161.5H1579V1000.9H1580V1048.83H1581V1227.51H1582V1227.51H1583V1233.39H1584V1233.39H1585V1233.39H1586V1233.39H1587V1233.39H1588V1233.39H1589V1233.39H1590V1233.39H1591V1233.39H1592V1233.39H1593V1252.31H1594V1252.31H1595V1161.5H1596V1055.56H1597V1055.56H1598V1098.44H1599V1098.44H1600V1233.39H1601V1151.83H1602V1151.83H1603V1186.31H1604V1219.52H1605V1219.52H1606V1194.71H1607V1194.71H1608V1021.5H1609V1021.5H1610V1018.56H1611V1018.56H1612V1131.23H1613V1178.32H1614V1178.32H1615V1194.71H1616V1194.71H1617V1139.64H1618V1139.64H1619V1051.77H1620V1051.77H1621V1059.76H1622V1059.76H1623V1178.32H1624V1178.32H1625V1098.44H1626V1098.44H1627V1059.76H1628V1084.56H1629V1084.56H1630V1059.76H1631V1059.76H1632V1190.51H1633V1190.51H1634V1208.59H1635V1208.59H1636V1224.99H1637V1186.31H1638V1186.31H1639V1186.31H1640V1102.64H1641V1102.64H1642V1172.85H1643V1114.84H1644V1114.84H1645V1004.68H1646V1051.77H1647V1051.77H1648V1186.31H1649V1190.51H1650V1190.51H1651V1194.71H1652V1194.71H1653V1203.12H1654V1203.12H1655V1206.91H1656V1206.91H1657V1206.91H1658V1211.11H1659V1211.11H1660V1211.11H1661V1211.11H1662V1223.72H1663V1271.65H1664V1271.65H1665V1288.05H1666V1288.05H1667V1231.71H1668V1256.52H1669V1256.52H1670V1274.59H1671V1274.59H1672V1309.49H1673V1309.49H1674V1309.49H1675V1309.49H1676V1309.49H1677V1309.49H1678V1309.49H1679V1309.49H1680V1320Z" fill="#239174"/>
<path d="M577.5,1190.93V1227.29M581.5,966.85V1220.66M585.5,1068.59V1233.39M589.5,996.28V1204.11M590.5,971.05V1213.17M591.5,971.05V1244.23M609.5,1113.99V1241.04M612.5,1084.56V1210.12M620.5,1082.46V1195.13M621.5,1082.46V1206.5M626.5,1198.08V1221.14M629.5,1156.04V1241.97M640.5,920.6V1206.57M643.5,946.67V1196.61M644.5,1005.53V1227.13M653.5,1122.82V1236.81M657.5,1098.02V1194.55M665.5,1072.37V1198.11M666.5,1072.37V1219.42M668.5,1127.45V1207.41M672.5,1127.45V1222.4M673.5,1127.45V1201.71M687.5,1143V1225.3M693.5,1032.85V1230.59M714.5,1182.1V1219.49M928.5,1063.12V1236.25M943.5,1009.73V1220.53M945.5,1022.34V1237.59M949.5,942.04V1220.85M955.5,1064.38V1223.87M958.5,1070.69V1202.38M960.5,1064.38V1213.37M961.5,1177.48V1217.05M982.5,1075.74V1214.26M989.5,1064.38V1238.88M992.5,987.87V1212.57M1013.5,1185.47V1218.19M1020.5,1173.69V1217.46M1026.5,1198.08V1215.22M1033.5,1181.26V1209.16M1219.5,1194.29V1235.94M1224.5,1123.24V1205.05M1243.5,1194.29V1216.55M1253.5,1152.25V1220.19M1257.5,1123.24V1214.77M1259.5,1066.91V1232.72M1263.5,1047.99V1207.87M1267.5,1064.38V1201.84M1272.5,1168.65V1229.57M1274.5,988.29V1213.52M1278.5,1110.21V1238.86M1280.5,1090.03V1241.42M1284.5,1181.68V1224.54M1290.5,1190.51V1218.53M1291.5,1190.51V1220.97M1305.5,1072.37V1232.5M1313.5,1135.86V1210.63M1314.5,1135.86V1238.03M1321.5,1186.73V1214.76M1322.5,1194.29V1239.32M1328.5,1168.65V1195.25M1333.5,1185.47V1218.06M1340.5,1161.08V1202.4M1352.5,1026.55V1242.65M1354.5,1194.29V1214.79M1357.5,1194.29V1228.71M1536.5,1164.44V1236.52M1537.5,1164.44V1225.42M1540.5,1198.92V1237.06M1555.5,1043.36V1197.68M1568.5,1059.76V1210.6M1574.5,950.45V1232.7M1575.5,950.45V1224.09M1607.5,1194.71V1242.33M1610.5,1018.56V1216.66M1614.5,1178.32V1240.82M1618.5,1139.64V1232.04M1619.5,1051.77V1224.28M1620.5,1051.77V1231.44M1623.5,1178.32V1242.47M1629.5,1084.56V1228.49M1630.5,1059.76V1216.98M1638.5,1186.31V1222.09M1649.5,1190.51V1232.79M1650.5,1190.51V1215.75" stroke="#ffffff" stroke-opacity="0.28" stroke-width="1" fill="none"/>
<rect x="2416" y="820" width="12" height="506" fill="url(#shR)"/>
<rect x="172" y="1322" width="2248" height="9" fill="url(#shB)"/>
<rect x="167" y="815" width="1" height="506" fill="#4a4a4a"/>
<rect x="168" y="1320" width="2248" height="1" fill="#cdeedc"/>
<rect x="167" y="1321" width="2249" height="1" fill="#767676"/>
<rect x="167" y="1321" width="10" height="1" fill="#333"/>
<rect x="156" y="1320" width="11" height="1" fill="#777"/>
<rect x="156" y="1236" width="11" height="1" fill="#777"/>
<rect x="156" y="1152" width="11" height="1" fill="#777"/>
<rect x="156" y="1068" width="11" height="1" fill="#777"/>
<rect x="156" y="984" width="11" height="1" fill="#777"/>
<rect x="156" y="900" width="11" height="1" fill="#777"/>
<rect x="156" y="815" width="11" height="1" fill="#777"/>
<rect x="168" y="1322" width="1" height="10" fill="#c8c8c8"/>
<rect x="489" y="1322" width="1" height="10" fill="#c8c8c8"/>
<rect x="810" y="1322" width="1" height="10" fill="#c8c8c8"/>
<rect x="1131" y="1322" width="1" height="10" fill="#c8c8c8"/>
<rect x="1453" y="1322" width="1" height="10" fill="#c8c8c8"/>
<rect x="1774" y="1322" width="1" height="10" fill="#c8c8c8"/>
<rect x="2095" y="1322" width="1" height="10" fill="#c8c8c8"/>
<rect x="2416" y="1322" width="1" height="10" fill="#c8c8c8"/>
<text x="146.5" y="1327.2" font-size="20.8" fill="#333333" text-anchor="end" textLength="12.7" lengthAdjust="spacingAndGlyphs">0</text>
<text x="146.5" y="1243.2" font-size="20.8" fill="#333333" text-anchor="end" textLength="25.4" lengthAdjust="spacingAndGlyphs">20</text>
<text x="146.5" y="1159.2" font-size="20.8" fill="#333333" text-anchor="end" textLength="25.4" lengthAdjust="spacingAndGlyphs">40</text>
<text x="146.5" y="1075.2" font-size="20.8" fill="#333333" text-anchor="end" textLength="25.4" lengthAdjust="spacingAndGlyphs">60</text>
<text x="146.5" y="991.2" font-size="20.8" fill="#333333" text-anchor="end" textLength="25.4" lengthAdjust="spacingAndGlyphs">80</text>
<text x="146.5" y="907.2" font-size="20.8" fill="#333333" text-anchor="end" textLength="38.1" lengthAdjust="spacingAndGlyphs">100</text>
<text x="146.5" y="822.2" font-size="20.8" fill="#333333" text-anchor="end" textLength="38.1" lengthAdjust="spacingAndGlyphs">120</text>
<text x="132.8" y="1357" font-size="21.5" fill="#111" textLength="71.1" lengthAdjust="spacingAndGlyphs">lun. 06</text>
<text x="450.6" y="1357" font-size="21.5" fill="#111" textLength="77.6" lengthAdjust="spacingAndGlyphs">mar. 07</text>
<text x="772.3" y="1357" font-size="21.5" fill="#111" textLength="77.6" lengthAdjust="spacingAndGlyphs">mer. 08</text>
<text x="1094.9" y="1357" font-size="21.5" fill="#111" textLength="73.1" lengthAdjust="spacingAndGlyphs">jeu. 09</text>
<text x="1415.2" y="1357" font-size="21.5" fill="#111" textLength="75.6" lengthAdjust="spacingAndGlyphs">ven. 10</text>
<text x="1732.4" y="1357" font-size="21.5" fill="#111" textLength="82.3" lengthAdjust="spacingAndGlyphs">sam. 11</text>
<text x="2056" y="1357" font-size="21.5" fill="#111" textLength="78.1" lengthAdjust="spacingAndGlyphs">dim. 12</text>
<text transform="translate(85.5,1068.3) rotate(-90)" font-size="22.3" fill="#333333" text-anchor="middle" textLength="29" lengthAdjust="spacingAndGlyphs">kW</text>
<rect x="562.2" y="806" width="411.6" height="57.6" rx="10" fill="#fff" stroke="#7f7f7f" stroke-width="3.4"/>
<text x="610.8" y="846.4" font-size="28.5" fill="#000" textLength="334" lengthAdjust="spacingAndGlyphs" xml:space="preserve">Consommation: 2 246 kWh</text>
<rect x="1100" y="806" width="411.6" height="57.6" rx="10" fill="#fff" stroke="#7f7f7f" stroke-width="3.4"/>
<text x="1214.6" y="846.4" font-size="28.5" fill="#000" textLength="203" lengthAdjust="spacingAndGlyphs" xml:space="preserve">P Max :  100 kW</text>
<rect x="1610.4" y="806" width="411.6" height="57.6" rx="10" fill="#fff" stroke="#7f7f7f" stroke-width="3.4"/>
<text x="1745.9" y="846.4" font-size="28.5" fill="#000" textLength="160" lengthAdjust="spacingAndGlyphs" xml:space="preserve">P min : 1 kW</text>
<rect x="2322" y="1322" width="116" height="57" fill="#fff"/>
<g transform="translate(2325,1320)">
<g fill="none" stroke="#1571b8" stroke-width="4.9" stroke-linecap="round" stroke-linejoin="round">
<path d="M36.3,24.0 A12.9,12.9 0 1 0 36.6,30.8 H23.6"/>
<path d="M45.3,30.6 C42.2,25 45.5,20.1 51,20.1 C56.6,20.1 60,25.2 56.8,30.8 L46,41.2 H60.3"/>
</g>
<path d="M67.5,4.8 L66.4,15.3 L74.9,18.6 L64.2,43.4 L66.6,20.8 L58.7,18.4 Z" fill="#e8582a"/>
<text x="68.2" y="14.7" font-size="8.4" font-weight="bold" fill="#ec6a3c" textLength="31" lengthAdjust="spacingAndGlyphs">FRANCE</text>
<path d="M77.5,18.8 H99.4 L93.7,25 H76 Z M73.6,28 H93.3 L88,33.9 H71.8 Z M69.6,37 H91.8 L86.1,43.4 H67.9 Z" fill="#f39320"/>
<text x="14.5" y="48.2" font-size="3.9" fill="#4d9ad6" textLength="74.4" lengthAdjust="spacingAndGlyphs" opacity="0.9">Optimisation des ressources énergétiques</text>
</g>
</svg></body></html>
